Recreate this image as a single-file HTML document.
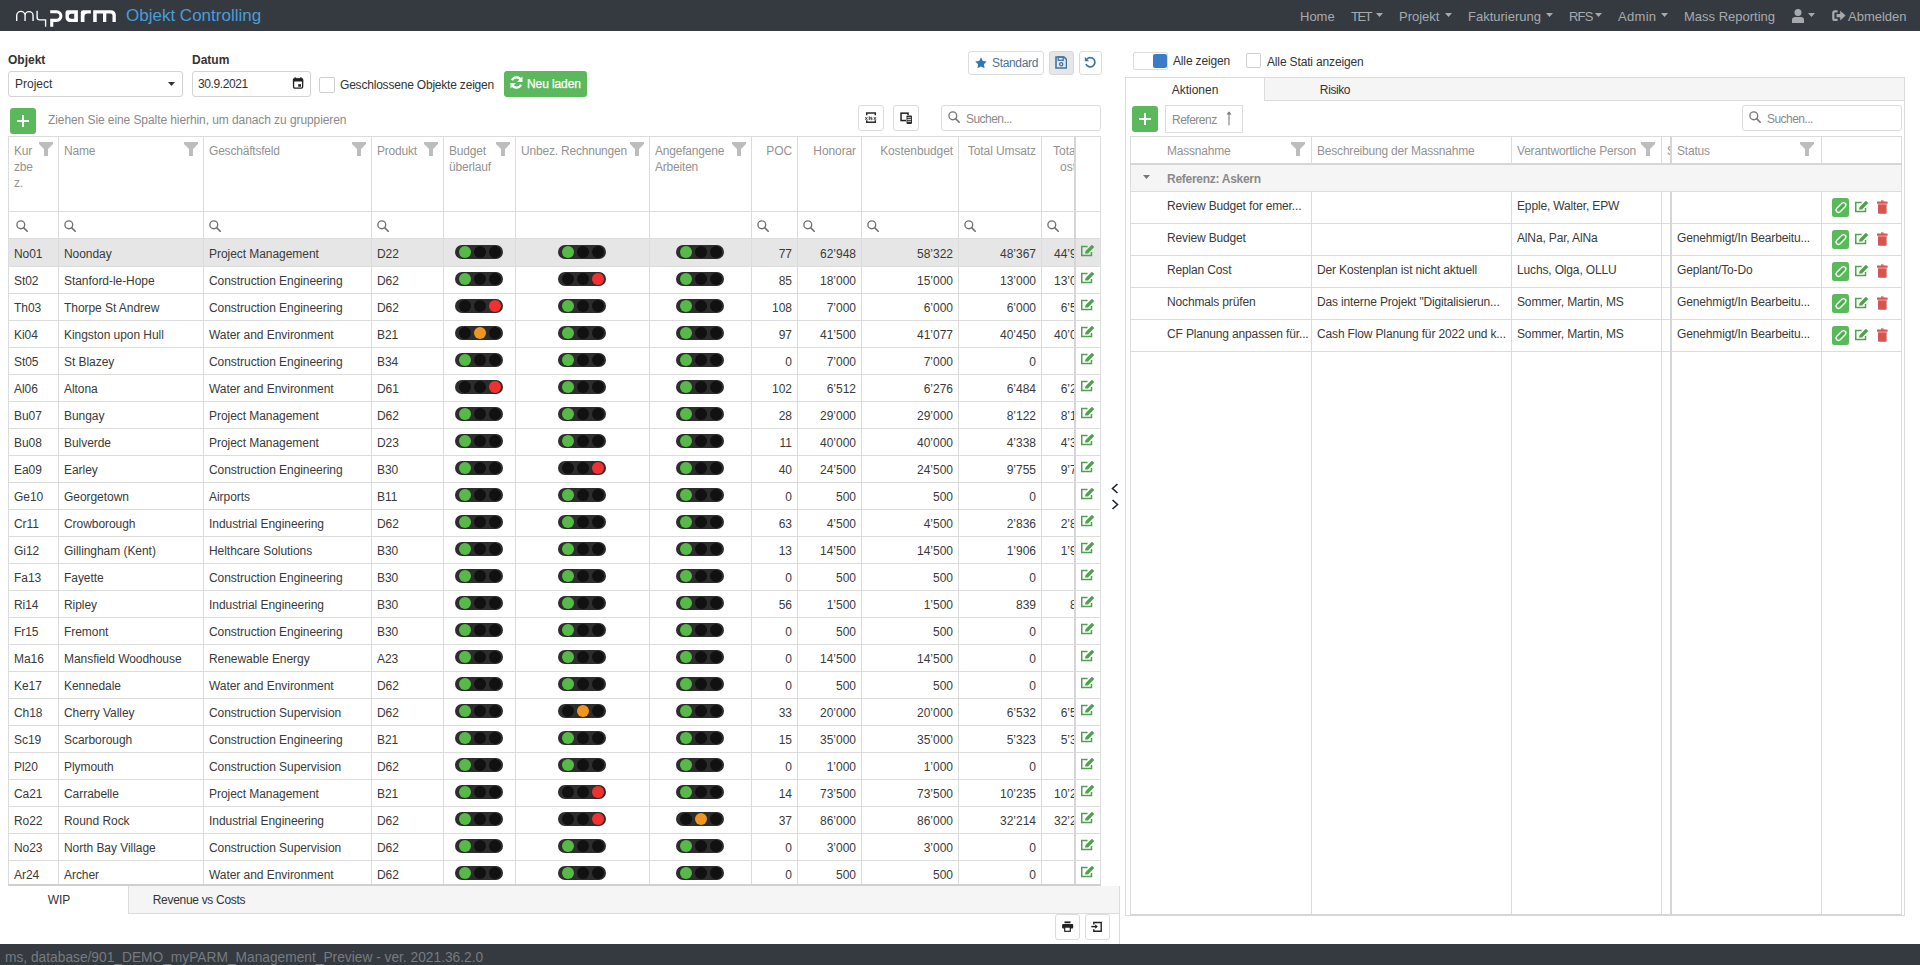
<!DOCTYPE html><html><head><meta charset="utf-8"><style>
html,body{margin:0;padding:0;width:1920px;height:965px;overflow:hidden;background:#fff;position:relative;font-family:"Liberation Sans",sans-serif;}
.t{position:absolute;white-space:nowrap;}
</style></head><body>
<div style="position:absolute;box-sizing:border-box;left:0px;top:0px;width:1920px;height:31px;background:#343a40"></div>
<svg style="position:absolute;left:0px;top:0px;" width="125" height="31" viewBox="0 0 125 31"><g fill="none" stroke="#fff" stroke-width="1.35"><path d="M16.7 21V15.6A4.17 4.17 0 0 1 25.05 15.6V21M25.05 15.6A4 4 0 0 1 33.05 15.6V21"/><path d="M37.1 10.8V17.2A2.6 2.6 0 0 0 39.7 19.8H45.6V26.8"/></g><g fill="none" stroke="#fff" stroke-width="3.1"><path d="M50.2 11.75H56.6A4.3 4.3 0 0 1 56.6 20.35H50.2M51.75 20V26.7"/></g><path fill="#fff" fill-rule="evenodd" d="M65.5 10.2H77.9V22H70A4.5 4.5 0 0 1 65.5 17.5V12.2Q65.5 10.2 67.5 10.2ZM74.2 13.7H71.3A2.5 2.5 0 0 0 68.8 16.2A2.5 2.5 0 0 0 71.3 18.7H74.2Z"/><path fill="#fff" d="M80.8 22V12.6A2.4 2.4 0 0 1 83.2 10.2H90.9V13.6H87.6A3.1 3.1 0 0 0 84.5 16.7V22Z"/><path fill="#fff" d="M93.2 22V10.2H111A4.8 4.8 0 0 1 115.8 15V22H112.5V15.6A2.1 2.1 0 0 0 110.4 13.5H106.3V22H103V13.5H96.7V22Z"/></svg>
<div class="t" style="left:126px;top:8.11px;font-size:17px;line-height:16px;color:#4b9dd6;font-weight:normal;">Objekt Controlling</div>
<div class="t" style="left:1300px;top:8.50px;font-size:13px;line-height:16px;color:#a7aaad;font-weight:normal;letter-spacing:0px;">Home</div>
<div class="t" style="left:1351px;top:8.50px;font-size:13px;line-height:16px;color:#a7aaad;font-weight:normal;letter-spacing:-1.5px;">TET</div>
<div class="t" style="left:1399px;top:8.50px;font-size:13px;line-height:16px;color:#a7aaad;font-weight:normal;letter-spacing:0px;">Projekt</div>
<div class="t" style="left:1468px;top:8.50px;font-size:13px;line-height:16px;color:#a7aaad;font-weight:normal;letter-spacing:0px;">Fakturierung</div>
<div class="t" style="left:1569px;top:8.50px;font-size:13px;line-height:16px;color:#a7aaad;font-weight:normal;letter-spacing:-0.8px;">RFS</div>
<div class="t" style="left:1618px;top:8.50px;font-size:13px;line-height:16px;color:#a7aaad;font-weight:normal;letter-spacing:0.3px;">Admin</div>
<div class="t" style="left:1684px;top:8.50px;font-size:13px;line-height:16px;color:#a7aaad;font-weight:normal;letter-spacing:0px;">Mass Reporting</div>
<svg style="position:absolute;left:1376px;top:13px;" width="7" height="4" viewBox="0 0 7 4"><path d="M0 0H7L3.5 4Z" fill="#a7aaad"/></svg>
<svg style="position:absolute;left:1445px;top:13px;" width="7" height="4" viewBox="0 0 7 4"><path d="M0 0H7L3.5 4Z" fill="#a7aaad"/></svg>
<svg style="position:absolute;left:1546px;top:13px;" width="7" height="4" viewBox="0 0 7 4"><path d="M0 0H7L3.5 4Z" fill="#a7aaad"/></svg>
<svg style="position:absolute;left:1595px;top:13px;" width="7" height="4" viewBox="0 0 7 4"><path d="M0 0H7L3.5 4Z" fill="#a7aaad"/></svg>
<svg style="position:absolute;left:1661px;top:13px;" width="7" height="4" viewBox="0 0 7 4"><path d="M0 0H7L3.5 4Z" fill="#a7aaad"/></svg>
<svg style="position:absolute;left:1808px;top:13px;" width="7" height="4" viewBox="0 0 7 4"><path d="M0 0H7L3.5 4Z" fill="#a7aaad"/></svg>
<svg style="position:absolute;left:1792px;top:9px;" width="12" height="15" viewBox="0 0 12 15"><circle cx="6" cy="3.6" r="3.5" fill="#a7aaad"/><path d="M0 14V10.6C0 9 1.4 8.1 3 8.1H9C10.6 8.1 12 9 12 10.6V14Z" fill="#a7aaad"/></svg>
<svg style="position:absolute;left:1832px;top:10px;" width="14" height="12" viewBox="0 0 14 12"><path d="M5.6 1.3H2.8Q1.3 1.3 1.3 2.8V8.4Q1.3 9.9 2.8 9.9H5.6" fill="none" stroke="#a7aaad" stroke-width="2.2"/><path d="M4.6 4H8.2V0.8L13.6 5.6L8.2 10.4V7.2H4.6Z" fill="#a7aaad"/></svg>
<div class="t" style="left:1848px;top:8.50px;font-size:13px;line-height:16px;color:#a7aaad;font-weight:normal;">Abmelden</div>
<div class="t" style="left:8px;top:51.84px;font-size:12px;line-height:16px;color:#333;font-weight:bold;">Objekt</div>
<div class="t" style="left:192px;top:51.84px;font-size:12px;line-height:16px;color:#333;font-weight:bold;">Datum</div>
<div style="position:absolute;box-sizing:border-box;left:8px;top:71px;width:175px;height:26px;border:1px solid #d4d4d4;border-radius:3px;background:#fff"></div>
<div class="t" style="left:15px;top:76.34px;font-size:12px;line-height:16px;color:#333;font-weight:normal;">Project</div>
<svg style="position:absolute;left:168px;top:82px;" width="7" height="4" viewBox="0 0 7 4"><path d="M0 0H7L3.5 4Z" fill="#333"/></svg>
<div style="position:absolute;box-sizing:border-box;left:192px;top:71px;width:119px;height:26px;border:1px solid #d4d4d4;border-radius:3px;background:#fff"></div>
<div class="t" style="left:198px;top:76.34px;font-size:12px;line-height:16px;color:#333;font-weight:normal;letter-spacing:-0.4px">30.9.2021</div>
<svg style="position:absolute;left:292px;top:77px;" width="12" height="12" viewBox="0 0 12 12"><rect x="1.55" y="2.2" width="9.1" height="8.9" rx="1.3" fill="none" stroke="#222" stroke-width="1.3"/><path d="M0.9 4.6V2.6Q0.9 1.2 2.3 1.2H9.8Q11.2 1.2 11.2 2.6V4.6Z" fill="#222"/><rect x="2.4" y="0.4" width="1.8" height="1.2" fill="#222"/><rect x="7.9" y="0.4" width="1.8" height="1.2" fill="#222"/><rect x="6.2" y="7.2" width="2.8" height="2.5" fill="#222"/></svg>
<div style="position:absolute;box-sizing:border-box;left:319px;top:77px;width:16px;height:16px;border:1px solid #cfcfcf;border-radius:2px;background:#fff"></div>
<div class="t" style="left:340px;top:77.34px;font-size:12px;line-height:16px;color:#333;font-weight:normal;letter-spacing:-0.2px">Geschlossene Objekte zeigen</div>
<div style="position:absolute;box-sizing:border-box;left:504px;top:71px;width:83px;height:26px;background:#5cb85c;border-radius:3px"></div>
<svg style="position:absolute;left:510px;top:76px;" width="13" height="13" viewBox="0 0 13 13"><path d="M11.2 4.6A5 5 0 0 0 2 4.2" fill="none" stroke="#fff" stroke-width="2.2"/><path d="M12.5 0.5V6H7Z" fill="#fff"/><path d="M1.8 8.4A5 5 0 0 0 11 8.8" fill="none" stroke="#fff" stroke-width="2.2"/><path d="M0.5 12.5V7H6Z" fill="#fff"/></svg>
<div class="t" style="left:527px;top:75.84px;font-size:12px;line-height:16px;color:#fff;font-weight:normal;letter-spacing:-0.1px;-webkit-text-stroke:0.25px #fff">Neu laden</div>
<div style="position:absolute;box-sizing:border-box;left:968px;top:51px;width:76px;height:24px;border:1px solid #dcdcdc;border-radius:3px;background:#fff"></div>
<svg style="position:absolute;left:975px;top:57px;" width="12" height="12" viewBox="0 0 12 12"><path d="M6 0.3L7.8 4L11.8 4.5L8.9 7.3L9.6 11.3L6 9.4L2.4 11.3L3.1 7.3L0.2 4.5L4.2 4Z" fill="#2f78b8"/></svg>
<div class="t" style="left:992px;top:54.84px;font-size:12px;line-height:16px;color:#4f7393;font-weight:normal;letter-spacing:-0.33px;">Standard</div>
<div style="position:absolute;box-sizing:border-box;left:1049px;top:51px;width:25px;height:24px;border:1px solid #d8d8d8;border-radius:3px;background:#e6e6e6"></div>
<svg style="position:absolute;left:1055px;top:56px;" width="12" height="13" viewBox="0 0 12 13"><path d="M1 1H9L11.5 3.5V12H1Z" fill="none" stroke="#3f74a6" stroke-width="1.6"/><rect x="3.2" y="1" width="5" height="3.3" fill="none" stroke="#3f74a6" stroke-width="1.3"/><circle cx="6.2" cy="8.2" r="1.6" fill="none" stroke="#3f74a6" stroke-width="1.3"/></svg>
<div style="position:absolute;box-sizing:border-box;left:1079px;top:51px;width:23px;height:24px;border:1px solid #dcdcdc;border-radius:3px;background:#fff"></div>
<svg style="position:absolute;left:1084px;top:56px;" width="12" height="12" viewBox="0 0 12 12"><path d="M2.8 3.2A4.6 4.6 0 1 1 2 8" fill="none" stroke="#3f74a6" stroke-width="1.7"/><path d="M0.8 0.8V5.2H5.2Z" fill="#3f74a6"/></svg>
<div style="position:absolute;box-sizing:border-box;left:10px;top:108px;width:26px;height:26px;background:#5cb85c;border-radius:3px"></div>
<div style="position:absolute;box-sizing:border-box;left:17px;top:120px;width:12px;height:2px;background:#fff"></div>
<div style="position:absolute;box-sizing:border-box;left:22px;top:115px;width:2px;height:12px;background:#fff"></div>
<div class="t" style="left:48px;top:111.84px;font-size:12px;line-height:16px;color:#8a8a8a;font-weight:normal;letter-spacing:-0.08px">Ziehen Sie eine Spalte hierhin, um danach zu gruppieren</div>
<div style="position:absolute;box-sizing:border-box;left:858px;top:105px;width:26px;height:26px;border:1px solid #dcdcdc;border-radius:3px;background:#fff"></div>
<svg style="position:absolute;left:865px;top:111px;" width="12" height="13" viewBox="0 0 12 13"><path d="M1.7 4.2V1.9H10.3V4.2M1.7 9.2V11.3H10.3V9.2" fill="none" stroke="#2a2a2a" stroke-width="1.5"/><path d="M0.3 6.1L2.4 8.9M2.4 6.1L0.3 8.9M8.9 6.1L11 8.9M11 6.1L8.9 8.9" stroke="#333" stroke-width="0.9"/><path d="M4.3 5.4V8.9" stroke="#333" stroke-width="1"/><path d="M7.2 6.3H5.7V7.5H7.1V8.7H5.6" fill="none" stroke="#333" stroke-width="0.8"/></svg>
<div style="position:absolute;box-sizing:border-box;left:893px;top:105px;width:26px;height:26px;border:1px solid #dcdcdc;border-radius:3px;background:#fff"></div>
<svg style="position:absolute;left:900px;top:111px;" width="13" height="14" viewBox="0 0 13 14"><rect x="1.05" y="2.15" width="7" height="7.4" fill="none" stroke="#222" stroke-width="1.5"/><rect x="6" y="4" width="6.5" height="9.4" rx="1" fill="#fff"/><rect x="6.5" y="4.5" width="5.5" height="8.4" rx="0.8" fill="#2a2a2a"/><path d="M7.4 6.7H11.1M7.4 8.5H11.1M7.4 10.3H11.1" stroke="#fff" stroke-width="0.8"/></svg>
<div style="position:absolute;box-sizing:border-box;left:941px;top:105px;width:160px;height:26px;border:1px solid #dcdcdc;border-radius:3px;background:#fff"></div>
<svg style="position:absolute;left:948px;top:111px;" width="12" height="12" viewBox="0 0 12 12"><circle cx="4.8" cy="4.8" r="3.9" fill="none" stroke="#777" stroke-width="1.35"/><path d="M7.6 7.6L11.2 11.2" stroke="#777" stroke-width="1.6" stroke-linecap="round"/></svg>
<div class="t" style="left:966px;top:110.84px;font-size:12px;line-height:16px;color:#8a8a8a;font-weight:normal;letter-spacing:-0.55px;">Suchen...</div>
<div style="position:absolute;box-sizing:border-box;left:9px;top:239px;width:1091px;height:27px;background:#e6e6e6"></div>
<div style="position:absolute;box-sizing:border-box;left:8px;top:136px;width:1093px;height:748px;border:1px solid #dcdcdc;border-bottom:none;box-sizing:border-box"></div>
<div style="position:absolute;box-sizing:border-box;left:8px;top:884px;width:1093px;height:2px;background:#d0d0d0"></div>
<div style="position:absolute;box-sizing:border-box;left:8px;top:211px;width:1092px;height:1px;background:#dcdcdc"></div>
<div style="position:absolute;box-sizing:border-box;left:8px;top:238px;width:1092px;height:1px;background:#dcdcdc"></div>
<div style="position:absolute;box-sizing:border-box;left:8px;top:266px;width:1092px;height:1px;background:#dcdcdc"></div>
<div style="position:absolute;box-sizing:border-box;left:8px;top:293px;width:1092px;height:1px;background:#dcdcdc"></div>
<div style="position:absolute;box-sizing:border-box;left:8px;top:320px;width:1092px;height:1px;background:#dcdcdc"></div>
<div style="position:absolute;box-sizing:border-box;left:8px;top:347px;width:1092px;height:1px;background:#dcdcdc"></div>
<div style="position:absolute;box-sizing:border-box;left:8px;top:374px;width:1092px;height:1px;background:#dcdcdc"></div>
<div style="position:absolute;box-sizing:border-box;left:8px;top:401px;width:1092px;height:1px;background:#dcdcdc"></div>
<div style="position:absolute;box-sizing:border-box;left:8px;top:428px;width:1092px;height:1px;background:#dcdcdc"></div>
<div style="position:absolute;box-sizing:border-box;left:8px;top:455px;width:1092px;height:1px;background:#dcdcdc"></div>
<div style="position:absolute;box-sizing:border-box;left:8px;top:482px;width:1092px;height:1px;background:#dcdcdc"></div>
<div style="position:absolute;box-sizing:border-box;left:8px;top:509px;width:1092px;height:1px;background:#dcdcdc"></div>
<div style="position:absolute;box-sizing:border-box;left:8px;top:536px;width:1092px;height:1px;background:#dcdcdc"></div>
<div style="position:absolute;box-sizing:border-box;left:8px;top:563px;width:1092px;height:1px;background:#dcdcdc"></div>
<div style="position:absolute;box-sizing:border-box;left:8px;top:590px;width:1092px;height:1px;background:#dcdcdc"></div>
<div style="position:absolute;box-sizing:border-box;left:8px;top:617px;width:1092px;height:1px;background:#dcdcdc"></div>
<div style="position:absolute;box-sizing:border-box;left:8px;top:644px;width:1092px;height:1px;background:#dcdcdc"></div>
<div style="position:absolute;box-sizing:border-box;left:8px;top:671px;width:1092px;height:1px;background:#dcdcdc"></div>
<div style="position:absolute;box-sizing:border-box;left:8px;top:698px;width:1092px;height:1px;background:#dcdcdc"></div>
<div style="position:absolute;box-sizing:border-box;left:8px;top:725px;width:1092px;height:1px;background:#dcdcdc"></div>
<div style="position:absolute;box-sizing:border-box;left:8px;top:752px;width:1092px;height:1px;background:#dcdcdc"></div>
<div style="position:absolute;box-sizing:border-box;left:8px;top:779px;width:1092px;height:1px;background:#dcdcdc"></div>
<div style="position:absolute;box-sizing:border-box;left:8px;top:806px;width:1092px;height:1px;background:#dcdcdc"></div>
<div style="position:absolute;box-sizing:border-box;left:8px;top:833px;width:1092px;height:1px;background:#dcdcdc"></div>
<div style="position:absolute;box-sizing:border-box;left:8px;top:860px;width:1092px;height:1px;background:#dcdcdc"></div>
<div style="position:absolute;box-sizing:border-box;left:58px;top:136px;width:1px;height:748px;background:#dcdcdc"></div>
<div style="position:absolute;box-sizing:border-box;left:203px;top:136px;width:1px;height:748px;background:#dcdcdc"></div>
<div style="position:absolute;box-sizing:border-box;left:371px;top:136px;width:1px;height:748px;background:#dcdcdc"></div>
<div style="position:absolute;box-sizing:border-box;left:443px;top:136px;width:1px;height:748px;background:#dcdcdc"></div>
<div style="position:absolute;box-sizing:border-box;left:515px;top:136px;width:1px;height:748px;background:#dcdcdc"></div>
<div style="position:absolute;box-sizing:border-box;left:649px;top:136px;width:1px;height:748px;background:#dcdcdc"></div>
<div style="position:absolute;box-sizing:border-box;left:751px;top:136px;width:1px;height:748px;background:#dcdcdc"></div>
<div style="position:absolute;box-sizing:border-box;left:797px;top:136px;width:1px;height:748px;background:#dcdcdc"></div>
<div style="position:absolute;box-sizing:border-box;left:861px;top:136px;width:1px;height:748px;background:#dcdcdc"></div>
<div style="position:absolute;box-sizing:border-box;left:958px;top:136px;width:1px;height:748px;background:#dcdcdc"></div>
<div style="position:absolute;box-sizing:border-box;left:1041px;top:136px;width:1px;height:748px;background:#dcdcdc"></div>
<div style="position:absolute;box-sizing:border-box;left:1074px;top:136px;width:2px;height:748px;background:#d6d6d6"></div>
<div class="t" style="left:14px;top:142.84px;font-size:12px;line-height:16px;color:#939393;font-weight:normal;letter-spacing:-0.2px;">Kur</div>
<div class="t" style="left:14px;top:158.84px;font-size:12px;line-height:16px;color:#939393;font-weight:normal;letter-spacing:-0.2px;">zbe</div>
<div class="t" style="left:14px;top:174.84px;font-size:12px;line-height:16px;color:#939393;font-weight:normal;letter-spacing:-0.2px;">z.</div>
<svg style="position:absolute;left:39px;top:142px;" width="14" height="14" viewBox="0 0 14 14"><path d="M0 0H14V2L9 7V14H5V7L0 2Z" fill="#bdbdbd"/></svg>
<div class="t" style="left:64px;top:142.84px;font-size:12px;line-height:16px;color:#939393;font-weight:normal;letter-spacing:-0.2px;">Name</div>
<svg style="position:absolute;left:184px;top:142px;" width="14" height="14" viewBox="0 0 14 14"><path d="M0 0H14V2L9 7V14H5V7L0 2Z" fill="#bdbdbd"/></svg>
<div class="t" style="left:209px;top:142.84px;font-size:12px;line-height:16px;color:#939393;font-weight:normal;letter-spacing:-0.2px;">Geschäftsfeld</div>
<svg style="position:absolute;left:352px;top:142px;" width="14" height="14" viewBox="0 0 14 14"><path d="M0 0H14V2L9 7V14H5V7L0 2Z" fill="#bdbdbd"/></svg>
<div class="t" style="left:377px;top:142.84px;font-size:12px;line-height:16px;color:#939393;font-weight:normal;letter-spacing:-0.2px;">Produkt</div>
<svg style="position:absolute;left:424px;top:142px;" width="14" height="14" viewBox="0 0 14 14"><path d="M0 0H14V2L9 7V14H5V7L0 2Z" fill="#bdbdbd"/></svg>
<div class="t" style="left:449px;top:142.84px;font-size:12px;line-height:16px;color:#939393;font-weight:normal;letter-spacing:-0.2px;">Budget</div>
<div class="t" style="left:449px;top:158.84px;font-size:12px;line-height:16px;color:#939393;font-weight:normal;letter-spacing:-0.2px;">überlauf</div>
<svg style="position:absolute;left:496px;top:142px;" width="14" height="14" viewBox="0 0 14 14"><path d="M0 0H14V2L9 7V14H5V7L0 2Z" fill="#bdbdbd"/></svg>
<div class="t" style="left:521px;top:142.84px;font-size:12px;line-height:16px;color:#939393;font-weight:normal;letter-spacing:-0.2px;">Unbez. Rechnungen</div>
<svg style="position:absolute;left:630px;top:142px;" width="14" height="14" viewBox="0 0 14 14"><path d="M0 0H14V2L9 7V14H5V7L0 2Z" fill="#bdbdbd"/></svg>
<div class="t" style="left:655px;top:142.84px;font-size:12px;line-height:16px;color:#939393;font-weight:normal;letter-spacing:-0.2px;">Angefangene</div>
<div class="t" style="left:655px;top:158.84px;font-size:12px;line-height:16px;color:#939393;font-weight:normal;letter-spacing:-0.2px;">Arbeiten</div>
<svg style="position:absolute;left:732px;top:142px;" width="14" height="14" viewBox="0 0 14 14"><path d="M0 0H14V2L9 7V14H5V7L0 2Z" fill="#bdbdbd"/></svg>
<div class="t" style="left:672px;width:120px;text-align:right;top:142.84px;font-size:12px;line-height:16px;color:#939393;font-weight:normal;letter-spacing:-0.1px;">POC</div>
<div class="t" style="left:736px;width:120px;text-align:right;top:142.84px;font-size:12px;line-height:16px;color:#939393;font-weight:normal;letter-spacing:-0.1px;">Honorar</div>
<div class="t" style="left:833px;width:120px;text-align:right;top:142.84px;font-size:12px;line-height:16px;color:#939393;font-weight:normal;letter-spacing:-0.1px;">Kostenbudget</div>
<div class="t" style="left:916px;width:120px;text-align:right;top:142.84px;font-size:12px;line-height:16px;color:#939393;font-weight:normal;letter-spacing:-0.1px;">Total Umsatz</div>
<div style="position:absolute;left:1042px;top:137px;width:32px;height:74px;overflow:hidden">
<div class="t" style="left:11px;top:5.84px;font-size:12px;line-height:16px;color:#939393;font-weight:normal;">Tota</div>
<div class="t" style="left:18px;top:21.84px;font-size:12px;line-height:16px;color:#939393;font-weight:normal;">osten</div>
</div>
<svg style="position:absolute;left:16px;top:220px;" width="12" height="12" viewBox="0 0 12 12"><circle cx="4.8" cy="4.8" r="3.9" fill="none" stroke="#707070" stroke-width="1.35"/><path d="M7.6 7.6L11.2 11.2" stroke="#707070" stroke-width="1.6" stroke-linecap="round"/></svg>
<svg style="position:absolute;left:64px;top:220px;" width="12" height="12" viewBox="0 0 12 12"><circle cx="4.8" cy="4.8" r="3.9" fill="none" stroke="#707070" stroke-width="1.35"/><path d="M7.6 7.6L11.2 11.2" stroke="#707070" stroke-width="1.6" stroke-linecap="round"/></svg>
<svg style="position:absolute;left:209px;top:220px;" width="12" height="12" viewBox="0 0 12 12"><circle cx="4.8" cy="4.8" r="3.9" fill="none" stroke="#707070" stroke-width="1.35"/><path d="M7.6 7.6L11.2 11.2" stroke="#707070" stroke-width="1.6" stroke-linecap="round"/></svg>
<svg style="position:absolute;left:377px;top:220px;" width="12" height="12" viewBox="0 0 12 12"><circle cx="4.8" cy="4.8" r="3.9" fill="none" stroke="#707070" stroke-width="1.35"/><path d="M7.6 7.6L11.2 11.2" stroke="#707070" stroke-width="1.6" stroke-linecap="round"/></svg>
<svg style="position:absolute;left:757px;top:220px;" width="12" height="12" viewBox="0 0 12 12"><circle cx="4.8" cy="4.8" r="3.9" fill="none" stroke="#707070" stroke-width="1.35"/><path d="M7.6 7.6L11.2 11.2" stroke="#707070" stroke-width="1.6" stroke-linecap="round"/></svg>
<svg style="position:absolute;left:803px;top:220px;" width="12" height="12" viewBox="0 0 12 12"><circle cx="4.8" cy="4.8" r="3.9" fill="none" stroke="#707070" stroke-width="1.35"/><path d="M7.6 7.6L11.2 11.2" stroke="#707070" stroke-width="1.6" stroke-linecap="round"/></svg>
<svg style="position:absolute;left:867px;top:220px;" width="12" height="12" viewBox="0 0 12 12"><circle cx="4.8" cy="4.8" r="3.9" fill="none" stroke="#707070" stroke-width="1.35"/><path d="M7.6 7.6L11.2 11.2" stroke="#707070" stroke-width="1.6" stroke-linecap="round"/></svg>
<svg style="position:absolute;left:964px;top:220px;" width="12" height="12" viewBox="0 0 12 12"><circle cx="4.8" cy="4.8" r="3.9" fill="none" stroke="#707070" stroke-width="1.35"/><path d="M7.6 7.6L11.2 11.2" stroke="#707070" stroke-width="1.6" stroke-linecap="round"/></svg>
<svg style="position:absolute;left:1047px;top:220px;" width="12" height="12" viewBox="0 0 12 12"><circle cx="4.8" cy="4.8" r="3.9" fill="none" stroke="#707070" stroke-width="1.35"/><path d="M7.6 7.6L11.2 11.2" stroke="#707070" stroke-width="1.6" stroke-linecap="round"/></svg>
<div class="t" style="left:14px;top:245.84px;font-size:12px;line-height:16px;color:#3a3a3a;font-weight:normal;letter-spacing:-0.05px;">No01</div>
<div class="t" style="left:64px;top:245.84px;font-size:12px;line-height:16px;color:#3a3a3a;font-weight:normal;letter-spacing:-0.05px;">Noonday</div>
<div class="t" style="left:209px;top:245.84px;font-size:12px;line-height:16px;color:#3a3a3a;font-weight:normal;letter-spacing:-0.05px;">Project Management</div>
<div class="t" style="left:377px;top:245.84px;font-size:12px;line-height:16px;color:#3a3a3a;font-weight:normal;letter-spacing:-0.05px;">D22</div>
<svg style="position:absolute;left:455px;top:245px;" width="48" height="14" viewBox="0 0 48 14"><rect x="0" y="0" width="48" height="14" rx="7" fill="#2d2d2d"/><circle cx="10" cy="7" r="6" fill="#57b947"/><circle cx="25" cy="7" r="6" fill="#111"/><circle cx="40" cy="7" r="6" fill="#111"/></svg>
<svg style="position:absolute;left:558px;top:245px;" width="48" height="14" viewBox="0 0 48 14"><rect x="0" y="0" width="48" height="14" rx="7" fill="#2d2d2d"/><circle cx="10" cy="7" r="6" fill="#57b947"/><circle cx="25" cy="7" r="6" fill="#111"/><circle cx="40" cy="7" r="6" fill="#111"/></svg>
<svg style="position:absolute;left:676px;top:245px;" width="48" height="14" viewBox="0 0 48 14"><rect x="0" y="0" width="48" height="14" rx="7" fill="#2d2d2d"/><circle cx="10" cy="7" r="6" fill="#57b947"/><circle cx="25" cy="7" r="6" fill="#111"/><circle cx="40" cy="7" r="6" fill="#111"/></svg>
<div class="t" style="left:752px;width:40px;text-align:right;top:245.84px;font-size:12px;line-height:16px;color:#3a3a3a;font-weight:normal;">77</div>
<div class="t" style="left:796px;width:60px;text-align:right;top:245.84px;font-size:12px;line-height:16px;color:#3a3a3a;font-weight:normal;">62’948</div>
<div class="t" style="left:873px;width:80px;text-align:right;top:245.84px;font-size:12px;line-height:16px;color:#3a3a3a;font-weight:normal;">58’322</div>
<div class="t" style="left:956px;width:80px;text-align:right;top:245.84px;font-size:12px;line-height:16px;color:#3a3a3a;font-weight:normal;">48’367</div>
<svg style="position:absolute;left:1081px;top:245px;" width="15" height="13" viewBox="0 0 15 13"><path d="M6.6 1.5H0.75V10.5H10.5V7" fill="none" stroke="#4fa14f" stroke-width="1.5"/><path d="M3.9 8.6L4.6 6L10.9 -0.3L13.3 2.1L7 8.4Z" fill="#4fa14f"/></svg>
<div class="t" style="left:14px;top:272.84px;font-size:12px;line-height:16px;color:#3a3a3a;font-weight:normal;letter-spacing:-0.05px;">St02</div>
<div class="t" style="left:64px;top:272.84px;font-size:12px;line-height:16px;color:#3a3a3a;font-weight:normal;letter-spacing:-0.05px;">Stanford-le-Hope</div>
<div class="t" style="left:209px;top:272.84px;font-size:12px;line-height:16px;color:#3a3a3a;font-weight:normal;letter-spacing:-0.05px;">Construction Engineering</div>
<div class="t" style="left:377px;top:272.84px;font-size:12px;line-height:16px;color:#3a3a3a;font-weight:normal;letter-spacing:-0.05px;">D62</div>
<svg style="position:absolute;left:455px;top:272px;" width="48" height="14" viewBox="0 0 48 14"><rect x="0" y="0" width="48" height="14" rx="7" fill="#2d2d2d"/><circle cx="10" cy="7" r="6" fill="#57b947"/><circle cx="25" cy="7" r="6" fill="#111"/><circle cx="40" cy="7" r="6" fill="#111"/></svg>
<svg style="position:absolute;left:558px;top:272px;" width="48" height="14" viewBox="0 0 48 14"><rect x="0" y="0" width="48" height="14" rx="7" fill="#2d2d2d"/><circle cx="10" cy="7" r="6" fill="#111"/><circle cx="25" cy="7" r="6" fill="#111"/><circle cx="40" cy="7" r="6" fill="#f23030"/></svg>
<svg style="position:absolute;left:676px;top:272px;" width="48" height="14" viewBox="0 0 48 14"><rect x="0" y="0" width="48" height="14" rx="7" fill="#2d2d2d"/><circle cx="10" cy="7" r="6" fill="#57b947"/><circle cx="25" cy="7" r="6" fill="#111"/><circle cx="40" cy="7" r="6" fill="#111"/></svg>
<div class="t" style="left:752px;width:40px;text-align:right;top:272.84px;font-size:12px;line-height:16px;color:#3a3a3a;font-weight:normal;">85</div>
<div class="t" style="left:796px;width:60px;text-align:right;top:272.84px;font-size:12px;line-height:16px;color:#3a3a3a;font-weight:normal;">18’000</div>
<div class="t" style="left:873px;width:80px;text-align:right;top:272.84px;font-size:12px;line-height:16px;color:#3a3a3a;font-weight:normal;">15’000</div>
<div class="t" style="left:956px;width:80px;text-align:right;top:272.84px;font-size:12px;line-height:16px;color:#3a3a3a;font-weight:normal;">13’000</div>
<svg style="position:absolute;left:1081px;top:272px;" width="15" height="13" viewBox="0 0 15 13"><path d="M6.6 1.5H0.75V10.5H10.5V7" fill="none" stroke="#4fa14f" stroke-width="1.5"/><path d="M3.9 8.6L4.6 6L10.9 -0.3L13.3 2.1L7 8.4Z" fill="#4fa14f"/></svg>
<div class="t" style="left:14px;top:299.84px;font-size:12px;line-height:16px;color:#3a3a3a;font-weight:normal;letter-spacing:-0.05px;">Th03</div>
<div class="t" style="left:64px;top:299.84px;font-size:12px;line-height:16px;color:#3a3a3a;font-weight:normal;letter-spacing:-0.05px;">Thorpe St Andrew</div>
<div class="t" style="left:209px;top:299.84px;font-size:12px;line-height:16px;color:#3a3a3a;font-weight:normal;letter-spacing:-0.05px;">Construction Engineering</div>
<div class="t" style="left:377px;top:299.84px;font-size:12px;line-height:16px;color:#3a3a3a;font-weight:normal;letter-spacing:-0.05px;">D62</div>
<svg style="position:absolute;left:455px;top:299px;" width="48" height="14" viewBox="0 0 48 14"><rect x="0" y="0" width="48" height="14" rx="7" fill="#2d2d2d"/><circle cx="10" cy="7" r="6" fill="#111"/><circle cx="25" cy="7" r="6" fill="#111"/><circle cx="40" cy="7" r="6" fill="#f23030"/></svg>
<svg style="position:absolute;left:558px;top:299px;" width="48" height="14" viewBox="0 0 48 14"><rect x="0" y="0" width="48" height="14" rx="7" fill="#2d2d2d"/><circle cx="10" cy="7" r="6" fill="#57b947"/><circle cx="25" cy="7" r="6" fill="#111"/><circle cx="40" cy="7" r="6" fill="#111"/></svg>
<svg style="position:absolute;left:676px;top:299px;" width="48" height="14" viewBox="0 0 48 14"><rect x="0" y="0" width="48" height="14" rx="7" fill="#2d2d2d"/><circle cx="10" cy="7" r="6" fill="#57b947"/><circle cx="25" cy="7" r="6" fill="#111"/><circle cx="40" cy="7" r="6" fill="#111"/></svg>
<div class="t" style="left:752px;width:40px;text-align:right;top:299.84px;font-size:12px;line-height:16px;color:#3a3a3a;font-weight:normal;">108</div>
<div class="t" style="left:796px;width:60px;text-align:right;top:299.84px;font-size:12px;line-height:16px;color:#3a3a3a;font-weight:normal;">7’000</div>
<div class="t" style="left:873px;width:80px;text-align:right;top:299.84px;font-size:12px;line-height:16px;color:#3a3a3a;font-weight:normal;">6’000</div>
<div class="t" style="left:956px;width:80px;text-align:right;top:299.84px;font-size:12px;line-height:16px;color:#3a3a3a;font-weight:normal;">6’000</div>
<svg style="position:absolute;left:1081px;top:299px;" width="15" height="13" viewBox="0 0 15 13"><path d="M6.6 1.5H0.75V10.5H10.5V7" fill="none" stroke="#4fa14f" stroke-width="1.5"/><path d="M3.9 8.6L4.6 6L10.9 -0.3L13.3 2.1L7 8.4Z" fill="#4fa14f"/></svg>
<div class="t" style="left:14px;top:326.84px;font-size:12px;line-height:16px;color:#3a3a3a;font-weight:normal;letter-spacing:-0.05px;">Ki04</div>
<div class="t" style="left:64px;top:326.84px;font-size:12px;line-height:16px;color:#3a3a3a;font-weight:normal;letter-spacing:-0.05px;">Kingston upon Hull</div>
<div class="t" style="left:209px;top:326.84px;font-size:12px;line-height:16px;color:#3a3a3a;font-weight:normal;letter-spacing:-0.05px;">Water and Environment</div>
<div class="t" style="left:377px;top:326.84px;font-size:12px;line-height:16px;color:#3a3a3a;font-weight:normal;letter-spacing:-0.05px;">B21</div>
<svg style="position:absolute;left:455px;top:326px;" width="48" height="14" viewBox="0 0 48 14"><rect x="0" y="0" width="48" height="14" rx="7" fill="#2d2d2d"/><circle cx="10" cy="7" r="6" fill="#111"/><circle cx="25" cy="7" r="6" fill="#f0961e"/><circle cx="40" cy="7" r="6" fill="#111"/></svg>
<svg style="position:absolute;left:558px;top:326px;" width="48" height="14" viewBox="0 0 48 14"><rect x="0" y="0" width="48" height="14" rx="7" fill="#2d2d2d"/><circle cx="10" cy="7" r="6" fill="#57b947"/><circle cx="25" cy="7" r="6" fill="#111"/><circle cx="40" cy="7" r="6" fill="#111"/></svg>
<svg style="position:absolute;left:676px;top:326px;" width="48" height="14" viewBox="0 0 48 14"><rect x="0" y="0" width="48" height="14" rx="7" fill="#2d2d2d"/><circle cx="10" cy="7" r="6" fill="#57b947"/><circle cx="25" cy="7" r="6" fill="#111"/><circle cx="40" cy="7" r="6" fill="#111"/></svg>
<div class="t" style="left:752px;width:40px;text-align:right;top:326.84px;font-size:12px;line-height:16px;color:#3a3a3a;font-weight:normal;">97</div>
<div class="t" style="left:796px;width:60px;text-align:right;top:326.84px;font-size:12px;line-height:16px;color:#3a3a3a;font-weight:normal;">41’500</div>
<div class="t" style="left:873px;width:80px;text-align:right;top:326.84px;font-size:12px;line-height:16px;color:#3a3a3a;font-weight:normal;">41’077</div>
<div class="t" style="left:956px;width:80px;text-align:right;top:326.84px;font-size:12px;line-height:16px;color:#3a3a3a;font-weight:normal;">40’450</div>
<svg style="position:absolute;left:1081px;top:326px;" width="15" height="13" viewBox="0 0 15 13"><path d="M6.6 1.5H0.75V10.5H10.5V7" fill="none" stroke="#4fa14f" stroke-width="1.5"/><path d="M3.9 8.6L4.6 6L10.9 -0.3L13.3 2.1L7 8.4Z" fill="#4fa14f"/></svg>
<div class="t" style="left:14px;top:353.84px;font-size:12px;line-height:16px;color:#3a3a3a;font-weight:normal;letter-spacing:-0.05px;">St05</div>
<div class="t" style="left:64px;top:353.84px;font-size:12px;line-height:16px;color:#3a3a3a;font-weight:normal;letter-spacing:-0.05px;">St Blazey</div>
<div class="t" style="left:209px;top:353.84px;font-size:12px;line-height:16px;color:#3a3a3a;font-weight:normal;letter-spacing:-0.05px;">Construction Engineering</div>
<div class="t" style="left:377px;top:353.84px;font-size:12px;line-height:16px;color:#3a3a3a;font-weight:normal;letter-spacing:-0.05px;">B34</div>
<svg style="position:absolute;left:455px;top:353px;" width="48" height="14" viewBox="0 0 48 14"><rect x="0" y="0" width="48" height="14" rx="7" fill="#2d2d2d"/><circle cx="10" cy="7" r="6" fill="#57b947"/><circle cx="25" cy="7" r="6" fill="#111"/><circle cx="40" cy="7" r="6" fill="#111"/></svg>
<svg style="position:absolute;left:558px;top:353px;" width="48" height="14" viewBox="0 0 48 14"><rect x="0" y="0" width="48" height="14" rx="7" fill="#2d2d2d"/><circle cx="10" cy="7" r="6" fill="#57b947"/><circle cx="25" cy="7" r="6" fill="#111"/><circle cx="40" cy="7" r="6" fill="#111"/></svg>
<svg style="position:absolute;left:676px;top:353px;" width="48" height="14" viewBox="0 0 48 14"><rect x="0" y="0" width="48" height="14" rx="7" fill="#2d2d2d"/><circle cx="10" cy="7" r="6" fill="#57b947"/><circle cx="25" cy="7" r="6" fill="#111"/><circle cx="40" cy="7" r="6" fill="#111"/></svg>
<div class="t" style="left:752px;width:40px;text-align:right;top:353.84px;font-size:12px;line-height:16px;color:#3a3a3a;font-weight:normal;">0</div>
<div class="t" style="left:796px;width:60px;text-align:right;top:353.84px;font-size:12px;line-height:16px;color:#3a3a3a;font-weight:normal;">7’000</div>
<div class="t" style="left:873px;width:80px;text-align:right;top:353.84px;font-size:12px;line-height:16px;color:#3a3a3a;font-weight:normal;">7’000</div>
<div class="t" style="left:956px;width:80px;text-align:right;top:353.84px;font-size:12px;line-height:16px;color:#3a3a3a;font-weight:normal;">0</div>
<svg style="position:absolute;left:1081px;top:353px;" width="15" height="13" viewBox="0 0 15 13"><path d="M6.6 1.5H0.75V10.5H10.5V7" fill="none" stroke="#4fa14f" stroke-width="1.5"/><path d="M3.9 8.6L4.6 6L10.9 -0.3L13.3 2.1L7 8.4Z" fill="#4fa14f"/></svg>
<div class="t" style="left:14px;top:380.84px;font-size:12px;line-height:16px;color:#3a3a3a;font-weight:normal;letter-spacing:-0.05px;">Al06</div>
<div class="t" style="left:64px;top:380.84px;font-size:12px;line-height:16px;color:#3a3a3a;font-weight:normal;letter-spacing:-0.05px;">Altona</div>
<div class="t" style="left:209px;top:380.84px;font-size:12px;line-height:16px;color:#3a3a3a;font-weight:normal;letter-spacing:-0.05px;">Water and Environment</div>
<div class="t" style="left:377px;top:380.84px;font-size:12px;line-height:16px;color:#3a3a3a;font-weight:normal;letter-spacing:-0.05px;">D61</div>
<svg style="position:absolute;left:455px;top:380px;" width="48" height="14" viewBox="0 0 48 14"><rect x="0" y="0" width="48" height="14" rx="7" fill="#2d2d2d"/><circle cx="10" cy="7" r="6" fill="#111"/><circle cx="25" cy="7" r="6" fill="#111"/><circle cx="40" cy="7" r="6" fill="#f23030"/></svg>
<svg style="position:absolute;left:558px;top:380px;" width="48" height="14" viewBox="0 0 48 14"><rect x="0" y="0" width="48" height="14" rx="7" fill="#2d2d2d"/><circle cx="10" cy="7" r="6" fill="#57b947"/><circle cx="25" cy="7" r="6" fill="#111"/><circle cx="40" cy="7" r="6" fill="#111"/></svg>
<svg style="position:absolute;left:676px;top:380px;" width="48" height="14" viewBox="0 0 48 14"><rect x="0" y="0" width="48" height="14" rx="7" fill="#2d2d2d"/><circle cx="10" cy="7" r="6" fill="#57b947"/><circle cx="25" cy="7" r="6" fill="#111"/><circle cx="40" cy="7" r="6" fill="#111"/></svg>
<div class="t" style="left:752px;width:40px;text-align:right;top:380.84px;font-size:12px;line-height:16px;color:#3a3a3a;font-weight:normal;">102</div>
<div class="t" style="left:796px;width:60px;text-align:right;top:380.84px;font-size:12px;line-height:16px;color:#3a3a3a;font-weight:normal;">6’512</div>
<div class="t" style="left:873px;width:80px;text-align:right;top:380.84px;font-size:12px;line-height:16px;color:#3a3a3a;font-weight:normal;">6’276</div>
<div class="t" style="left:956px;width:80px;text-align:right;top:380.84px;font-size:12px;line-height:16px;color:#3a3a3a;font-weight:normal;">6’484</div>
<svg style="position:absolute;left:1081px;top:380px;" width="15" height="13" viewBox="0 0 15 13"><path d="M6.6 1.5H0.75V10.5H10.5V7" fill="none" stroke="#4fa14f" stroke-width="1.5"/><path d="M3.9 8.6L4.6 6L10.9 -0.3L13.3 2.1L7 8.4Z" fill="#4fa14f"/></svg>
<div class="t" style="left:14px;top:407.84px;font-size:12px;line-height:16px;color:#3a3a3a;font-weight:normal;letter-spacing:-0.05px;">Bu07</div>
<div class="t" style="left:64px;top:407.84px;font-size:12px;line-height:16px;color:#3a3a3a;font-weight:normal;letter-spacing:-0.05px;">Bungay</div>
<div class="t" style="left:209px;top:407.84px;font-size:12px;line-height:16px;color:#3a3a3a;font-weight:normal;letter-spacing:-0.05px;">Project Management</div>
<div class="t" style="left:377px;top:407.84px;font-size:12px;line-height:16px;color:#3a3a3a;font-weight:normal;letter-spacing:-0.05px;">D62</div>
<svg style="position:absolute;left:455px;top:407px;" width="48" height="14" viewBox="0 0 48 14"><rect x="0" y="0" width="48" height="14" rx="7" fill="#2d2d2d"/><circle cx="10" cy="7" r="6" fill="#57b947"/><circle cx="25" cy="7" r="6" fill="#111"/><circle cx="40" cy="7" r="6" fill="#111"/></svg>
<svg style="position:absolute;left:558px;top:407px;" width="48" height="14" viewBox="0 0 48 14"><rect x="0" y="0" width="48" height="14" rx="7" fill="#2d2d2d"/><circle cx="10" cy="7" r="6" fill="#57b947"/><circle cx="25" cy="7" r="6" fill="#111"/><circle cx="40" cy="7" r="6" fill="#111"/></svg>
<svg style="position:absolute;left:676px;top:407px;" width="48" height="14" viewBox="0 0 48 14"><rect x="0" y="0" width="48" height="14" rx="7" fill="#2d2d2d"/><circle cx="10" cy="7" r="6" fill="#57b947"/><circle cx="25" cy="7" r="6" fill="#111"/><circle cx="40" cy="7" r="6" fill="#111"/></svg>
<div class="t" style="left:752px;width:40px;text-align:right;top:407.84px;font-size:12px;line-height:16px;color:#3a3a3a;font-weight:normal;">28</div>
<div class="t" style="left:796px;width:60px;text-align:right;top:407.84px;font-size:12px;line-height:16px;color:#3a3a3a;font-weight:normal;">29’000</div>
<div class="t" style="left:873px;width:80px;text-align:right;top:407.84px;font-size:12px;line-height:16px;color:#3a3a3a;font-weight:normal;">29’000</div>
<div class="t" style="left:956px;width:80px;text-align:right;top:407.84px;font-size:12px;line-height:16px;color:#3a3a3a;font-weight:normal;">8’122</div>
<svg style="position:absolute;left:1081px;top:407px;" width="15" height="13" viewBox="0 0 15 13"><path d="M6.6 1.5H0.75V10.5H10.5V7" fill="none" stroke="#4fa14f" stroke-width="1.5"/><path d="M3.9 8.6L4.6 6L10.9 -0.3L13.3 2.1L7 8.4Z" fill="#4fa14f"/></svg>
<div class="t" style="left:14px;top:434.84px;font-size:12px;line-height:16px;color:#3a3a3a;font-weight:normal;letter-spacing:-0.05px;">Bu08</div>
<div class="t" style="left:64px;top:434.84px;font-size:12px;line-height:16px;color:#3a3a3a;font-weight:normal;letter-spacing:-0.05px;">Bulverde</div>
<div class="t" style="left:209px;top:434.84px;font-size:12px;line-height:16px;color:#3a3a3a;font-weight:normal;letter-spacing:-0.05px;">Project Management</div>
<div class="t" style="left:377px;top:434.84px;font-size:12px;line-height:16px;color:#3a3a3a;font-weight:normal;letter-spacing:-0.05px;">D23</div>
<svg style="position:absolute;left:455px;top:434px;" width="48" height="14" viewBox="0 0 48 14"><rect x="0" y="0" width="48" height="14" rx="7" fill="#2d2d2d"/><circle cx="10" cy="7" r="6" fill="#57b947"/><circle cx="25" cy="7" r="6" fill="#111"/><circle cx="40" cy="7" r="6" fill="#111"/></svg>
<svg style="position:absolute;left:558px;top:434px;" width="48" height="14" viewBox="0 0 48 14"><rect x="0" y="0" width="48" height="14" rx="7" fill="#2d2d2d"/><circle cx="10" cy="7" r="6" fill="#57b947"/><circle cx="25" cy="7" r="6" fill="#111"/><circle cx="40" cy="7" r="6" fill="#111"/></svg>
<svg style="position:absolute;left:676px;top:434px;" width="48" height="14" viewBox="0 0 48 14"><rect x="0" y="0" width="48" height="14" rx="7" fill="#2d2d2d"/><circle cx="10" cy="7" r="6" fill="#57b947"/><circle cx="25" cy="7" r="6" fill="#111"/><circle cx="40" cy="7" r="6" fill="#111"/></svg>
<div class="t" style="left:752px;width:40px;text-align:right;top:434.84px;font-size:12px;line-height:16px;color:#3a3a3a;font-weight:normal;">11</div>
<div class="t" style="left:796px;width:60px;text-align:right;top:434.84px;font-size:12px;line-height:16px;color:#3a3a3a;font-weight:normal;">40’000</div>
<div class="t" style="left:873px;width:80px;text-align:right;top:434.84px;font-size:12px;line-height:16px;color:#3a3a3a;font-weight:normal;">40’000</div>
<div class="t" style="left:956px;width:80px;text-align:right;top:434.84px;font-size:12px;line-height:16px;color:#3a3a3a;font-weight:normal;">4’338</div>
<svg style="position:absolute;left:1081px;top:434px;" width="15" height="13" viewBox="0 0 15 13"><path d="M6.6 1.5H0.75V10.5H10.5V7" fill="none" stroke="#4fa14f" stroke-width="1.5"/><path d="M3.9 8.6L4.6 6L10.9 -0.3L13.3 2.1L7 8.4Z" fill="#4fa14f"/></svg>
<div class="t" style="left:14px;top:461.84px;font-size:12px;line-height:16px;color:#3a3a3a;font-weight:normal;letter-spacing:-0.05px;">Ea09</div>
<div class="t" style="left:64px;top:461.84px;font-size:12px;line-height:16px;color:#3a3a3a;font-weight:normal;letter-spacing:-0.05px;">Earley</div>
<div class="t" style="left:209px;top:461.84px;font-size:12px;line-height:16px;color:#3a3a3a;font-weight:normal;letter-spacing:-0.05px;">Construction Engineering</div>
<div class="t" style="left:377px;top:461.84px;font-size:12px;line-height:16px;color:#3a3a3a;font-weight:normal;letter-spacing:-0.05px;">B30</div>
<svg style="position:absolute;left:455px;top:461px;" width="48" height="14" viewBox="0 0 48 14"><rect x="0" y="0" width="48" height="14" rx="7" fill="#2d2d2d"/><circle cx="10" cy="7" r="6" fill="#57b947"/><circle cx="25" cy="7" r="6" fill="#111"/><circle cx="40" cy="7" r="6" fill="#111"/></svg>
<svg style="position:absolute;left:558px;top:461px;" width="48" height="14" viewBox="0 0 48 14"><rect x="0" y="0" width="48" height="14" rx="7" fill="#2d2d2d"/><circle cx="10" cy="7" r="6" fill="#111"/><circle cx="25" cy="7" r="6" fill="#111"/><circle cx="40" cy="7" r="6" fill="#f23030"/></svg>
<svg style="position:absolute;left:676px;top:461px;" width="48" height="14" viewBox="0 0 48 14"><rect x="0" y="0" width="48" height="14" rx="7" fill="#2d2d2d"/><circle cx="10" cy="7" r="6" fill="#57b947"/><circle cx="25" cy="7" r="6" fill="#111"/><circle cx="40" cy="7" r="6" fill="#111"/></svg>
<div class="t" style="left:752px;width:40px;text-align:right;top:461.84px;font-size:12px;line-height:16px;color:#3a3a3a;font-weight:normal;">40</div>
<div class="t" style="left:796px;width:60px;text-align:right;top:461.84px;font-size:12px;line-height:16px;color:#3a3a3a;font-weight:normal;">24’500</div>
<div class="t" style="left:873px;width:80px;text-align:right;top:461.84px;font-size:12px;line-height:16px;color:#3a3a3a;font-weight:normal;">24’500</div>
<div class="t" style="left:956px;width:80px;text-align:right;top:461.84px;font-size:12px;line-height:16px;color:#3a3a3a;font-weight:normal;">9’755</div>
<svg style="position:absolute;left:1081px;top:461px;" width="15" height="13" viewBox="0 0 15 13"><path d="M6.6 1.5H0.75V10.5H10.5V7" fill="none" stroke="#4fa14f" stroke-width="1.5"/><path d="M3.9 8.6L4.6 6L10.9 -0.3L13.3 2.1L7 8.4Z" fill="#4fa14f"/></svg>
<div class="t" style="left:14px;top:488.84px;font-size:12px;line-height:16px;color:#3a3a3a;font-weight:normal;letter-spacing:-0.05px;">Ge10</div>
<div class="t" style="left:64px;top:488.84px;font-size:12px;line-height:16px;color:#3a3a3a;font-weight:normal;letter-spacing:-0.05px;">Georgetown</div>
<div class="t" style="left:209px;top:488.84px;font-size:12px;line-height:16px;color:#3a3a3a;font-weight:normal;letter-spacing:-0.05px;">Airports</div>
<div class="t" style="left:377px;top:488.84px;font-size:12px;line-height:16px;color:#3a3a3a;font-weight:normal;letter-spacing:-0.05px;">B11</div>
<svg style="position:absolute;left:455px;top:488px;" width="48" height="14" viewBox="0 0 48 14"><rect x="0" y="0" width="48" height="14" rx="7" fill="#2d2d2d"/><circle cx="10" cy="7" r="6" fill="#57b947"/><circle cx="25" cy="7" r="6" fill="#111"/><circle cx="40" cy="7" r="6" fill="#111"/></svg>
<svg style="position:absolute;left:558px;top:488px;" width="48" height="14" viewBox="0 0 48 14"><rect x="0" y="0" width="48" height="14" rx="7" fill="#2d2d2d"/><circle cx="10" cy="7" r="6" fill="#57b947"/><circle cx="25" cy="7" r="6" fill="#111"/><circle cx="40" cy="7" r="6" fill="#111"/></svg>
<svg style="position:absolute;left:676px;top:488px;" width="48" height="14" viewBox="0 0 48 14"><rect x="0" y="0" width="48" height="14" rx="7" fill="#2d2d2d"/><circle cx="10" cy="7" r="6" fill="#57b947"/><circle cx="25" cy="7" r="6" fill="#111"/><circle cx="40" cy="7" r="6" fill="#111"/></svg>
<div class="t" style="left:752px;width:40px;text-align:right;top:488.84px;font-size:12px;line-height:16px;color:#3a3a3a;font-weight:normal;">0</div>
<div class="t" style="left:796px;width:60px;text-align:right;top:488.84px;font-size:12px;line-height:16px;color:#3a3a3a;font-weight:normal;">500</div>
<div class="t" style="left:873px;width:80px;text-align:right;top:488.84px;font-size:12px;line-height:16px;color:#3a3a3a;font-weight:normal;">500</div>
<div class="t" style="left:956px;width:80px;text-align:right;top:488.84px;font-size:12px;line-height:16px;color:#3a3a3a;font-weight:normal;">0</div>
<svg style="position:absolute;left:1081px;top:488px;" width="15" height="13" viewBox="0 0 15 13"><path d="M6.6 1.5H0.75V10.5H10.5V7" fill="none" stroke="#4fa14f" stroke-width="1.5"/><path d="M3.9 8.6L4.6 6L10.9 -0.3L13.3 2.1L7 8.4Z" fill="#4fa14f"/></svg>
<div class="t" style="left:14px;top:515.84px;font-size:12px;line-height:16px;color:#3a3a3a;font-weight:normal;letter-spacing:-0.05px;">Cr11</div>
<div class="t" style="left:64px;top:515.84px;font-size:12px;line-height:16px;color:#3a3a3a;font-weight:normal;letter-spacing:-0.05px;">Crowborough</div>
<div class="t" style="left:209px;top:515.84px;font-size:12px;line-height:16px;color:#3a3a3a;font-weight:normal;letter-spacing:-0.05px;">Industrial Engineering</div>
<div class="t" style="left:377px;top:515.84px;font-size:12px;line-height:16px;color:#3a3a3a;font-weight:normal;letter-spacing:-0.05px;">D62</div>
<svg style="position:absolute;left:455px;top:515px;" width="48" height="14" viewBox="0 0 48 14"><rect x="0" y="0" width="48" height="14" rx="7" fill="#2d2d2d"/><circle cx="10" cy="7" r="6" fill="#57b947"/><circle cx="25" cy="7" r="6" fill="#111"/><circle cx="40" cy="7" r="6" fill="#111"/></svg>
<svg style="position:absolute;left:558px;top:515px;" width="48" height="14" viewBox="0 0 48 14"><rect x="0" y="0" width="48" height="14" rx="7" fill="#2d2d2d"/><circle cx="10" cy="7" r="6" fill="#57b947"/><circle cx="25" cy="7" r="6" fill="#111"/><circle cx="40" cy="7" r="6" fill="#111"/></svg>
<svg style="position:absolute;left:676px;top:515px;" width="48" height="14" viewBox="0 0 48 14"><rect x="0" y="0" width="48" height="14" rx="7" fill="#2d2d2d"/><circle cx="10" cy="7" r="6" fill="#57b947"/><circle cx="25" cy="7" r="6" fill="#111"/><circle cx="40" cy="7" r="6" fill="#111"/></svg>
<div class="t" style="left:752px;width:40px;text-align:right;top:515.84px;font-size:12px;line-height:16px;color:#3a3a3a;font-weight:normal;">63</div>
<div class="t" style="left:796px;width:60px;text-align:right;top:515.84px;font-size:12px;line-height:16px;color:#3a3a3a;font-weight:normal;">4’500</div>
<div class="t" style="left:873px;width:80px;text-align:right;top:515.84px;font-size:12px;line-height:16px;color:#3a3a3a;font-weight:normal;">4’500</div>
<div class="t" style="left:956px;width:80px;text-align:right;top:515.84px;font-size:12px;line-height:16px;color:#3a3a3a;font-weight:normal;">2’836</div>
<svg style="position:absolute;left:1081px;top:515px;" width="15" height="13" viewBox="0 0 15 13"><path d="M6.6 1.5H0.75V10.5H10.5V7" fill="none" stroke="#4fa14f" stroke-width="1.5"/><path d="M3.9 8.6L4.6 6L10.9 -0.3L13.3 2.1L7 8.4Z" fill="#4fa14f"/></svg>
<div class="t" style="left:14px;top:542.84px;font-size:12px;line-height:16px;color:#3a3a3a;font-weight:normal;letter-spacing:-0.05px;">Gi12</div>
<div class="t" style="left:64px;top:542.84px;font-size:12px;line-height:16px;color:#3a3a3a;font-weight:normal;letter-spacing:-0.05px;">Gillingham (Kent)</div>
<div class="t" style="left:209px;top:542.84px;font-size:12px;line-height:16px;color:#3a3a3a;font-weight:normal;letter-spacing:-0.05px;">Helthcare Solutions</div>
<div class="t" style="left:377px;top:542.84px;font-size:12px;line-height:16px;color:#3a3a3a;font-weight:normal;letter-spacing:-0.05px;">B30</div>
<svg style="position:absolute;left:455px;top:542px;" width="48" height="14" viewBox="0 0 48 14"><rect x="0" y="0" width="48" height="14" rx="7" fill="#2d2d2d"/><circle cx="10" cy="7" r="6" fill="#57b947"/><circle cx="25" cy="7" r="6" fill="#111"/><circle cx="40" cy="7" r="6" fill="#111"/></svg>
<svg style="position:absolute;left:558px;top:542px;" width="48" height="14" viewBox="0 0 48 14"><rect x="0" y="0" width="48" height="14" rx="7" fill="#2d2d2d"/><circle cx="10" cy="7" r="6" fill="#57b947"/><circle cx="25" cy="7" r="6" fill="#111"/><circle cx="40" cy="7" r="6" fill="#111"/></svg>
<svg style="position:absolute;left:676px;top:542px;" width="48" height="14" viewBox="0 0 48 14"><rect x="0" y="0" width="48" height="14" rx="7" fill="#2d2d2d"/><circle cx="10" cy="7" r="6" fill="#57b947"/><circle cx="25" cy="7" r="6" fill="#111"/><circle cx="40" cy="7" r="6" fill="#111"/></svg>
<div class="t" style="left:752px;width:40px;text-align:right;top:542.84px;font-size:12px;line-height:16px;color:#3a3a3a;font-weight:normal;">13</div>
<div class="t" style="left:796px;width:60px;text-align:right;top:542.84px;font-size:12px;line-height:16px;color:#3a3a3a;font-weight:normal;">14’500</div>
<div class="t" style="left:873px;width:80px;text-align:right;top:542.84px;font-size:12px;line-height:16px;color:#3a3a3a;font-weight:normal;">14’500</div>
<div class="t" style="left:956px;width:80px;text-align:right;top:542.84px;font-size:12px;line-height:16px;color:#3a3a3a;font-weight:normal;">1’906</div>
<svg style="position:absolute;left:1081px;top:542px;" width="15" height="13" viewBox="0 0 15 13"><path d="M6.6 1.5H0.75V10.5H10.5V7" fill="none" stroke="#4fa14f" stroke-width="1.5"/><path d="M3.9 8.6L4.6 6L10.9 -0.3L13.3 2.1L7 8.4Z" fill="#4fa14f"/></svg>
<div class="t" style="left:14px;top:569.84px;font-size:12px;line-height:16px;color:#3a3a3a;font-weight:normal;letter-spacing:-0.05px;">Fa13</div>
<div class="t" style="left:64px;top:569.84px;font-size:12px;line-height:16px;color:#3a3a3a;font-weight:normal;letter-spacing:-0.05px;">Fayette</div>
<div class="t" style="left:209px;top:569.84px;font-size:12px;line-height:16px;color:#3a3a3a;font-weight:normal;letter-spacing:-0.05px;">Construction Engineering</div>
<div class="t" style="left:377px;top:569.84px;font-size:12px;line-height:16px;color:#3a3a3a;font-weight:normal;letter-spacing:-0.05px;">B30</div>
<svg style="position:absolute;left:455px;top:569px;" width="48" height="14" viewBox="0 0 48 14"><rect x="0" y="0" width="48" height="14" rx="7" fill="#2d2d2d"/><circle cx="10" cy="7" r="6" fill="#57b947"/><circle cx="25" cy="7" r="6" fill="#111"/><circle cx="40" cy="7" r="6" fill="#111"/></svg>
<svg style="position:absolute;left:558px;top:569px;" width="48" height="14" viewBox="0 0 48 14"><rect x="0" y="0" width="48" height="14" rx="7" fill="#2d2d2d"/><circle cx="10" cy="7" r="6" fill="#57b947"/><circle cx="25" cy="7" r="6" fill="#111"/><circle cx="40" cy="7" r="6" fill="#111"/></svg>
<svg style="position:absolute;left:676px;top:569px;" width="48" height="14" viewBox="0 0 48 14"><rect x="0" y="0" width="48" height="14" rx="7" fill="#2d2d2d"/><circle cx="10" cy="7" r="6" fill="#57b947"/><circle cx="25" cy="7" r="6" fill="#111"/><circle cx="40" cy="7" r="6" fill="#111"/></svg>
<div class="t" style="left:752px;width:40px;text-align:right;top:569.84px;font-size:12px;line-height:16px;color:#3a3a3a;font-weight:normal;">0</div>
<div class="t" style="left:796px;width:60px;text-align:right;top:569.84px;font-size:12px;line-height:16px;color:#3a3a3a;font-weight:normal;">500</div>
<div class="t" style="left:873px;width:80px;text-align:right;top:569.84px;font-size:12px;line-height:16px;color:#3a3a3a;font-weight:normal;">500</div>
<div class="t" style="left:956px;width:80px;text-align:right;top:569.84px;font-size:12px;line-height:16px;color:#3a3a3a;font-weight:normal;">0</div>
<svg style="position:absolute;left:1081px;top:569px;" width="15" height="13" viewBox="0 0 15 13"><path d="M6.6 1.5H0.75V10.5H10.5V7" fill="none" stroke="#4fa14f" stroke-width="1.5"/><path d="M3.9 8.6L4.6 6L10.9 -0.3L13.3 2.1L7 8.4Z" fill="#4fa14f"/></svg>
<div class="t" style="left:14px;top:596.84px;font-size:12px;line-height:16px;color:#3a3a3a;font-weight:normal;letter-spacing:-0.05px;">Ri14</div>
<div class="t" style="left:64px;top:596.84px;font-size:12px;line-height:16px;color:#3a3a3a;font-weight:normal;letter-spacing:-0.05px;">Ripley</div>
<div class="t" style="left:209px;top:596.84px;font-size:12px;line-height:16px;color:#3a3a3a;font-weight:normal;letter-spacing:-0.05px;">Industrial Engineering</div>
<div class="t" style="left:377px;top:596.84px;font-size:12px;line-height:16px;color:#3a3a3a;font-weight:normal;letter-spacing:-0.05px;">B30</div>
<svg style="position:absolute;left:455px;top:596px;" width="48" height="14" viewBox="0 0 48 14"><rect x="0" y="0" width="48" height="14" rx="7" fill="#2d2d2d"/><circle cx="10" cy="7" r="6" fill="#57b947"/><circle cx="25" cy="7" r="6" fill="#111"/><circle cx="40" cy="7" r="6" fill="#111"/></svg>
<svg style="position:absolute;left:558px;top:596px;" width="48" height="14" viewBox="0 0 48 14"><rect x="0" y="0" width="48" height="14" rx="7" fill="#2d2d2d"/><circle cx="10" cy="7" r="6" fill="#57b947"/><circle cx="25" cy="7" r="6" fill="#111"/><circle cx="40" cy="7" r="6" fill="#111"/></svg>
<svg style="position:absolute;left:676px;top:596px;" width="48" height="14" viewBox="0 0 48 14"><rect x="0" y="0" width="48" height="14" rx="7" fill="#2d2d2d"/><circle cx="10" cy="7" r="6" fill="#57b947"/><circle cx="25" cy="7" r="6" fill="#111"/><circle cx="40" cy="7" r="6" fill="#111"/></svg>
<div class="t" style="left:752px;width:40px;text-align:right;top:596.84px;font-size:12px;line-height:16px;color:#3a3a3a;font-weight:normal;">56</div>
<div class="t" style="left:796px;width:60px;text-align:right;top:596.84px;font-size:12px;line-height:16px;color:#3a3a3a;font-weight:normal;">1’500</div>
<div class="t" style="left:873px;width:80px;text-align:right;top:596.84px;font-size:12px;line-height:16px;color:#3a3a3a;font-weight:normal;">1’500</div>
<div class="t" style="left:956px;width:80px;text-align:right;top:596.84px;font-size:12px;line-height:16px;color:#3a3a3a;font-weight:normal;">839</div>
<svg style="position:absolute;left:1081px;top:596px;" width="15" height="13" viewBox="0 0 15 13"><path d="M6.6 1.5H0.75V10.5H10.5V7" fill="none" stroke="#4fa14f" stroke-width="1.5"/><path d="M3.9 8.6L4.6 6L10.9 -0.3L13.3 2.1L7 8.4Z" fill="#4fa14f"/></svg>
<div class="t" style="left:14px;top:623.84px;font-size:12px;line-height:16px;color:#3a3a3a;font-weight:normal;letter-spacing:-0.05px;">Fr15</div>
<div class="t" style="left:64px;top:623.84px;font-size:12px;line-height:16px;color:#3a3a3a;font-weight:normal;letter-spacing:-0.05px;">Fremont</div>
<div class="t" style="left:209px;top:623.84px;font-size:12px;line-height:16px;color:#3a3a3a;font-weight:normal;letter-spacing:-0.05px;">Construction Engineering</div>
<div class="t" style="left:377px;top:623.84px;font-size:12px;line-height:16px;color:#3a3a3a;font-weight:normal;letter-spacing:-0.05px;">B30</div>
<svg style="position:absolute;left:455px;top:623px;" width="48" height="14" viewBox="0 0 48 14"><rect x="0" y="0" width="48" height="14" rx="7" fill="#2d2d2d"/><circle cx="10" cy="7" r="6" fill="#57b947"/><circle cx="25" cy="7" r="6" fill="#111"/><circle cx="40" cy="7" r="6" fill="#111"/></svg>
<svg style="position:absolute;left:558px;top:623px;" width="48" height="14" viewBox="0 0 48 14"><rect x="0" y="0" width="48" height="14" rx="7" fill="#2d2d2d"/><circle cx="10" cy="7" r="6" fill="#57b947"/><circle cx="25" cy="7" r="6" fill="#111"/><circle cx="40" cy="7" r="6" fill="#111"/></svg>
<svg style="position:absolute;left:676px;top:623px;" width="48" height="14" viewBox="0 0 48 14"><rect x="0" y="0" width="48" height="14" rx="7" fill="#2d2d2d"/><circle cx="10" cy="7" r="6" fill="#57b947"/><circle cx="25" cy="7" r="6" fill="#111"/><circle cx="40" cy="7" r="6" fill="#111"/></svg>
<div class="t" style="left:752px;width:40px;text-align:right;top:623.84px;font-size:12px;line-height:16px;color:#3a3a3a;font-weight:normal;">0</div>
<div class="t" style="left:796px;width:60px;text-align:right;top:623.84px;font-size:12px;line-height:16px;color:#3a3a3a;font-weight:normal;">500</div>
<div class="t" style="left:873px;width:80px;text-align:right;top:623.84px;font-size:12px;line-height:16px;color:#3a3a3a;font-weight:normal;">500</div>
<div class="t" style="left:956px;width:80px;text-align:right;top:623.84px;font-size:12px;line-height:16px;color:#3a3a3a;font-weight:normal;">0</div>
<svg style="position:absolute;left:1081px;top:623px;" width="15" height="13" viewBox="0 0 15 13"><path d="M6.6 1.5H0.75V10.5H10.5V7" fill="none" stroke="#4fa14f" stroke-width="1.5"/><path d="M3.9 8.6L4.6 6L10.9 -0.3L13.3 2.1L7 8.4Z" fill="#4fa14f"/></svg>
<div class="t" style="left:14px;top:650.84px;font-size:12px;line-height:16px;color:#3a3a3a;font-weight:normal;letter-spacing:-0.05px;">Ma16</div>
<div class="t" style="left:64px;top:650.84px;font-size:12px;line-height:16px;color:#3a3a3a;font-weight:normal;letter-spacing:-0.05px;">Mansfield Woodhouse</div>
<div class="t" style="left:209px;top:650.84px;font-size:12px;line-height:16px;color:#3a3a3a;font-weight:normal;letter-spacing:-0.05px;">Renewable Energy</div>
<div class="t" style="left:377px;top:650.84px;font-size:12px;line-height:16px;color:#3a3a3a;font-weight:normal;letter-spacing:-0.05px;">A23</div>
<svg style="position:absolute;left:455px;top:650px;" width="48" height="14" viewBox="0 0 48 14"><rect x="0" y="0" width="48" height="14" rx="7" fill="#2d2d2d"/><circle cx="10" cy="7" r="6" fill="#57b947"/><circle cx="25" cy="7" r="6" fill="#111"/><circle cx="40" cy="7" r="6" fill="#111"/></svg>
<svg style="position:absolute;left:558px;top:650px;" width="48" height="14" viewBox="0 0 48 14"><rect x="0" y="0" width="48" height="14" rx="7" fill="#2d2d2d"/><circle cx="10" cy="7" r="6" fill="#57b947"/><circle cx="25" cy="7" r="6" fill="#111"/><circle cx="40" cy="7" r="6" fill="#111"/></svg>
<svg style="position:absolute;left:676px;top:650px;" width="48" height="14" viewBox="0 0 48 14"><rect x="0" y="0" width="48" height="14" rx="7" fill="#2d2d2d"/><circle cx="10" cy="7" r="6" fill="#57b947"/><circle cx="25" cy="7" r="6" fill="#111"/><circle cx="40" cy="7" r="6" fill="#111"/></svg>
<div class="t" style="left:752px;width:40px;text-align:right;top:650.84px;font-size:12px;line-height:16px;color:#3a3a3a;font-weight:normal;">0</div>
<div class="t" style="left:796px;width:60px;text-align:right;top:650.84px;font-size:12px;line-height:16px;color:#3a3a3a;font-weight:normal;">14’500</div>
<div class="t" style="left:873px;width:80px;text-align:right;top:650.84px;font-size:12px;line-height:16px;color:#3a3a3a;font-weight:normal;">14’500</div>
<div class="t" style="left:956px;width:80px;text-align:right;top:650.84px;font-size:12px;line-height:16px;color:#3a3a3a;font-weight:normal;">0</div>
<svg style="position:absolute;left:1081px;top:650px;" width="15" height="13" viewBox="0 0 15 13"><path d="M6.6 1.5H0.75V10.5H10.5V7" fill="none" stroke="#4fa14f" stroke-width="1.5"/><path d="M3.9 8.6L4.6 6L10.9 -0.3L13.3 2.1L7 8.4Z" fill="#4fa14f"/></svg>
<div class="t" style="left:14px;top:677.84px;font-size:12px;line-height:16px;color:#3a3a3a;font-weight:normal;letter-spacing:-0.05px;">Ke17</div>
<div class="t" style="left:64px;top:677.84px;font-size:12px;line-height:16px;color:#3a3a3a;font-weight:normal;letter-spacing:-0.05px;">Kennedale</div>
<div class="t" style="left:209px;top:677.84px;font-size:12px;line-height:16px;color:#3a3a3a;font-weight:normal;letter-spacing:-0.05px;">Water and Environment</div>
<div class="t" style="left:377px;top:677.84px;font-size:12px;line-height:16px;color:#3a3a3a;font-weight:normal;letter-spacing:-0.05px;">D62</div>
<svg style="position:absolute;left:455px;top:677px;" width="48" height="14" viewBox="0 0 48 14"><rect x="0" y="0" width="48" height="14" rx="7" fill="#2d2d2d"/><circle cx="10" cy="7" r="6" fill="#57b947"/><circle cx="25" cy="7" r="6" fill="#111"/><circle cx="40" cy="7" r="6" fill="#111"/></svg>
<svg style="position:absolute;left:558px;top:677px;" width="48" height="14" viewBox="0 0 48 14"><rect x="0" y="0" width="48" height="14" rx="7" fill="#2d2d2d"/><circle cx="10" cy="7" r="6" fill="#57b947"/><circle cx="25" cy="7" r="6" fill="#111"/><circle cx="40" cy="7" r="6" fill="#111"/></svg>
<svg style="position:absolute;left:676px;top:677px;" width="48" height="14" viewBox="0 0 48 14"><rect x="0" y="0" width="48" height="14" rx="7" fill="#2d2d2d"/><circle cx="10" cy="7" r="6" fill="#57b947"/><circle cx="25" cy="7" r="6" fill="#111"/><circle cx="40" cy="7" r="6" fill="#111"/></svg>
<div class="t" style="left:752px;width:40px;text-align:right;top:677.84px;font-size:12px;line-height:16px;color:#3a3a3a;font-weight:normal;">0</div>
<div class="t" style="left:796px;width:60px;text-align:right;top:677.84px;font-size:12px;line-height:16px;color:#3a3a3a;font-weight:normal;">500</div>
<div class="t" style="left:873px;width:80px;text-align:right;top:677.84px;font-size:12px;line-height:16px;color:#3a3a3a;font-weight:normal;">500</div>
<div class="t" style="left:956px;width:80px;text-align:right;top:677.84px;font-size:12px;line-height:16px;color:#3a3a3a;font-weight:normal;">0</div>
<svg style="position:absolute;left:1081px;top:677px;" width="15" height="13" viewBox="0 0 15 13"><path d="M6.6 1.5H0.75V10.5H10.5V7" fill="none" stroke="#4fa14f" stroke-width="1.5"/><path d="M3.9 8.6L4.6 6L10.9 -0.3L13.3 2.1L7 8.4Z" fill="#4fa14f"/></svg>
<div class="t" style="left:14px;top:704.84px;font-size:12px;line-height:16px;color:#3a3a3a;font-weight:normal;letter-spacing:-0.05px;">Ch18</div>
<div class="t" style="left:64px;top:704.84px;font-size:12px;line-height:16px;color:#3a3a3a;font-weight:normal;letter-spacing:-0.05px;">Cherry Valley</div>
<div class="t" style="left:209px;top:704.84px;font-size:12px;line-height:16px;color:#3a3a3a;font-weight:normal;letter-spacing:-0.05px;">Construction Supervision</div>
<div class="t" style="left:377px;top:704.84px;font-size:12px;line-height:16px;color:#3a3a3a;font-weight:normal;letter-spacing:-0.05px;">D62</div>
<svg style="position:absolute;left:455px;top:704px;" width="48" height="14" viewBox="0 0 48 14"><rect x="0" y="0" width="48" height="14" rx="7" fill="#2d2d2d"/><circle cx="10" cy="7" r="6" fill="#57b947"/><circle cx="25" cy="7" r="6" fill="#111"/><circle cx="40" cy="7" r="6" fill="#111"/></svg>
<svg style="position:absolute;left:558px;top:704px;" width="48" height="14" viewBox="0 0 48 14"><rect x="0" y="0" width="48" height="14" rx="7" fill="#2d2d2d"/><circle cx="10" cy="7" r="6" fill="#111"/><circle cx="25" cy="7" r="6" fill="#f0961e"/><circle cx="40" cy="7" r="6" fill="#111"/></svg>
<svg style="position:absolute;left:676px;top:704px;" width="48" height="14" viewBox="0 0 48 14"><rect x="0" y="0" width="48" height="14" rx="7" fill="#2d2d2d"/><circle cx="10" cy="7" r="6" fill="#57b947"/><circle cx="25" cy="7" r="6" fill="#111"/><circle cx="40" cy="7" r="6" fill="#111"/></svg>
<div class="t" style="left:752px;width:40px;text-align:right;top:704.84px;font-size:12px;line-height:16px;color:#3a3a3a;font-weight:normal;">33</div>
<div class="t" style="left:796px;width:60px;text-align:right;top:704.84px;font-size:12px;line-height:16px;color:#3a3a3a;font-weight:normal;">20’000</div>
<div class="t" style="left:873px;width:80px;text-align:right;top:704.84px;font-size:12px;line-height:16px;color:#3a3a3a;font-weight:normal;">20’000</div>
<div class="t" style="left:956px;width:80px;text-align:right;top:704.84px;font-size:12px;line-height:16px;color:#3a3a3a;font-weight:normal;">6’532</div>
<svg style="position:absolute;left:1081px;top:704px;" width="15" height="13" viewBox="0 0 15 13"><path d="M6.6 1.5H0.75V10.5H10.5V7" fill="none" stroke="#4fa14f" stroke-width="1.5"/><path d="M3.9 8.6L4.6 6L10.9 -0.3L13.3 2.1L7 8.4Z" fill="#4fa14f"/></svg>
<div class="t" style="left:14px;top:731.84px;font-size:12px;line-height:16px;color:#3a3a3a;font-weight:normal;letter-spacing:-0.05px;">Sc19</div>
<div class="t" style="left:64px;top:731.84px;font-size:12px;line-height:16px;color:#3a3a3a;font-weight:normal;letter-spacing:-0.05px;">Scarborough</div>
<div class="t" style="left:209px;top:731.84px;font-size:12px;line-height:16px;color:#3a3a3a;font-weight:normal;letter-spacing:-0.05px;">Construction Engineering</div>
<div class="t" style="left:377px;top:731.84px;font-size:12px;line-height:16px;color:#3a3a3a;font-weight:normal;letter-spacing:-0.05px;">B21</div>
<svg style="position:absolute;left:455px;top:731px;" width="48" height="14" viewBox="0 0 48 14"><rect x="0" y="0" width="48" height="14" rx="7" fill="#2d2d2d"/><circle cx="10" cy="7" r="6" fill="#57b947"/><circle cx="25" cy="7" r="6" fill="#111"/><circle cx="40" cy="7" r="6" fill="#111"/></svg>
<svg style="position:absolute;left:558px;top:731px;" width="48" height="14" viewBox="0 0 48 14"><rect x="0" y="0" width="48" height="14" rx="7" fill="#2d2d2d"/><circle cx="10" cy="7" r="6" fill="#57b947"/><circle cx="25" cy="7" r="6" fill="#111"/><circle cx="40" cy="7" r="6" fill="#111"/></svg>
<svg style="position:absolute;left:676px;top:731px;" width="48" height="14" viewBox="0 0 48 14"><rect x="0" y="0" width="48" height="14" rx="7" fill="#2d2d2d"/><circle cx="10" cy="7" r="6" fill="#57b947"/><circle cx="25" cy="7" r="6" fill="#111"/><circle cx="40" cy="7" r="6" fill="#111"/></svg>
<div class="t" style="left:752px;width:40px;text-align:right;top:731.84px;font-size:12px;line-height:16px;color:#3a3a3a;font-weight:normal;">15</div>
<div class="t" style="left:796px;width:60px;text-align:right;top:731.84px;font-size:12px;line-height:16px;color:#3a3a3a;font-weight:normal;">35’000</div>
<div class="t" style="left:873px;width:80px;text-align:right;top:731.84px;font-size:12px;line-height:16px;color:#3a3a3a;font-weight:normal;">35’000</div>
<div class="t" style="left:956px;width:80px;text-align:right;top:731.84px;font-size:12px;line-height:16px;color:#3a3a3a;font-weight:normal;">5’323</div>
<svg style="position:absolute;left:1081px;top:731px;" width="15" height="13" viewBox="0 0 15 13"><path d="M6.6 1.5H0.75V10.5H10.5V7" fill="none" stroke="#4fa14f" stroke-width="1.5"/><path d="M3.9 8.6L4.6 6L10.9 -0.3L13.3 2.1L7 8.4Z" fill="#4fa14f"/></svg>
<div class="t" style="left:14px;top:758.84px;font-size:12px;line-height:16px;color:#3a3a3a;font-weight:normal;letter-spacing:-0.05px;">Pl20</div>
<div class="t" style="left:64px;top:758.84px;font-size:12px;line-height:16px;color:#3a3a3a;font-weight:normal;letter-spacing:-0.05px;">Plymouth</div>
<div class="t" style="left:209px;top:758.84px;font-size:12px;line-height:16px;color:#3a3a3a;font-weight:normal;letter-spacing:-0.05px;">Construction Supervision</div>
<div class="t" style="left:377px;top:758.84px;font-size:12px;line-height:16px;color:#3a3a3a;font-weight:normal;letter-spacing:-0.05px;">D62</div>
<svg style="position:absolute;left:455px;top:758px;" width="48" height="14" viewBox="0 0 48 14"><rect x="0" y="0" width="48" height="14" rx="7" fill="#2d2d2d"/><circle cx="10" cy="7" r="6" fill="#57b947"/><circle cx="25" cy="7" r="6" fill="#111"/><circle cx="40" cy="7" r="6" fill="#111"/></svg>
<svg style="position:absolute;left:558px;top:758px;" width="48" height="14" viewBox="0 0 48 14"><rect x="0" y="0" width="48" height="14" rx="7" fill="#2d2d2d"/><circle cx="10" cy="7" r="6" fill="#57b947"/><circle cx="25" cy="7" r="6" fill="#111"/><circle cx="40" cy="7" r="6" fill="#111"/></svg>
<svg style="position:absolute;left:676px;top:758px;" width="48" height="14" viewBox="0 0 48 14"><rect x="0" y="0" width="48" height="14" rx="7" fill="#2d2d2d"/><circle cx="10" cy="7" r="6" fill="#57b947"/><circle cx="25" cy="7" r="6" fill="#111"/><circle cx="40" cy="7" r="6" fill="#111"/></svg>
<div class="t" style="left:752px;width:40px;text-align:right;top:758.84px;font-size:12px;line-height:16px;color:#3a3a3a;font-weight:normal;">0</div>
<div class="t" style="left:796px;width:60px;text-align:right;top:758.84px;font-size:12px;line-height:16px;color:#3a3a3a;font-weight:normal;">1’000</div>
<div class="t" style="left:873px;width:80px;text-align:right;top:758.84px;font-size:12px;line-height:16px;color:#3a3a3a;font-weight:normal;">1’000</div>
<div class="t" style="left:956px;width:80px;text-align:right;top:758.84px;font-size:12px;line-height:16px;color:#3a3a3a;font-weight:normal;">0</div>
<svg style="position:absolute;left:1081px;top:758px;" width="15" height="13" viewBox="0 0 15 13"><path d="M6.6 1.5H0.75V10.5H10.5V7" fill="none" stroke="#4fa14f" stroke-width="1.5"/><path d="M3.9 8.6L4.6 6L10.9 -0.3L13.3 2.1L7 8.4Z" fill="#4fa14f"/></svg>
<div class="t" style="left:14px;top:785.84px;font-size:12px;line-height:16px;color:#3a3a3a;font-weight:normal;letter-spacing:-0.05px;">Ca21</div>
<div class="t" style="left:64px;top:785.84px;font-size:12px;line-height:16px;color:#3a3a3a;font-weight:normal;letter-spacing:-0.05px;">Carrabelle</div>
<div class="t" style="left:209px;top:785.84px;font-size:12px;line-height:16px;color:#3a3a3a;font-weight:normal;letter-spacing:-0.05px;">Project Management</div>
<div class="t" style="left:377px;top:785.84px;font-size:12px;line-height:16px;color:#3a3a3a;font-weight:normal;letter-spacing:-0.05px;">B21</div>
<svg style="position:absolute;left:455px;top:785px;" width="48" height="14" viewBox="0 0 48 14"><rect x="0" y="0" width="48" height="14" rx="7" fill="#2d2d2d"/><circle cx="10" cy="7" r="6" fill="#57b947"/><circle cx="25" cy="7" r="6" fill="#111"/><circle cx="40" cy="7" r="6" fill="#111"/></svg>
<svg style="position:absolute;left:558px;top:785px;" width="48" height="14" viewBox="0 0 48 14"><rect x="0" y="0" width="48" height="14" rx="7" fill="#2d2d2d"/><circle cx="10" cy="7" r="6" fill="#111"/><circle cx="25" cy="7" r="6" fill="#111"/><circle cx="40" cy="7" r="6" fill="#f23030"/></svg>
<svg style="position:absolute;left:676px;top:785px;" width="48" height="14" viewBox="0 0 48 14"><rect x="0" y="0" width="48" height="14" rx="7" fill="#2d2d2d"/><circle cx="10" cy="7" r="6" fill="#57b947"/><circle cx="25" cy="7" r="6" fill="#111"/><circle cx="40" cy="7" r="6" fill="#111"/></svg>
<div class="t" style="left:752px;width:40px;text-align:right;top:785.84px;font-size:12px;line-height:16px;color:#3a3a3a;font-weight:normal;">14</div>
<div class="t" style="left:796px;width:60px;text-align:right;top:785.84px;font-size:12px;line-height:16px;color:#3a3a3a;font-weight:normal;">73’500</div>
<div class="t" style="left:873px;width:80px;text-align:right;top:785.84px;font-size:12px;line-height:16px;color:#3a3a3a;font-weight:normal;">73’500</div>
<div class="t" style="left:956px;width:80px;text-align:right;top:785.84px;font-size:12px;line-height:16px;color:#3a3a3a;font-weight:normal;">10’235</div>
<svg style="position:absolute;left:1081px;top:785px;" width="15" height="13" viewBox="0 0 15 13"><path d="M6.6 1.5H0.75V10.5H10.5V7" fill="none" stroke="#4fa14f" stroke-width="1.5"/><path d="M3.9 8.6L4.6 6L10.9 -0.3L13.3 2.1L7 8.4Z" fill="#4fa14f"/></svg>
<div class="t" style="left:14px;top:812.84px;font-size:12px;line-height:16px;color:#3a3a3a;font-weight:normal;letter-spacing:-0.05px;">Ro22</div>
<div class="t" style="left:64px;top:812.84px;font-size:12px;line-height:16px;color:#3a3a3a;font-weight:normal;letter-spacing:-0.05px;">Round Rock</div>
<div class="t" style="left:209px;top:812.84px;font-size:12px;line-height:16px;color:#3a3a3a;font-weight:normal;letter-spacing:-0.05px;">Industrial Engineering</div>
<div class="t" style="left:377px;top:812.84px;font-size:12px;line-height:16px;color:#3a3a3a;font-weight:normal;letter-spacing:-0.05px;">D62</div>
<svg style="position:absolute;left:455px;top:812px;" width="48" height="14" viewBox="0 0 48 14"><rect x="0" y="0" width="48" height="14" rx="7" fill="#2d2d2d"/><circle cx="10" cy="7" r="6" fill="#57b947"/><circle cx="25" cy="7" r="6" fill="#111"/><circle cx="40" cy="7" r="6" fill="#111"/></svg>
<svg style="position:absolute;left:558px;top:812px;" width="48" height="14" viewBox="0 0 48 14"><rect x="0" y="0" width="48" height="14" rx="7" fill="#2d2d2d"/><circle cx="10" cy="7" r="6" fill="#111"/><circle cx="25" cy="7" r="6" fill="#111"/><circle cx="40" cy="7" r="6" fill="#f23030"/></svg>
<svg style="position:absolute;left:676px;top:812px;" width="48" height="14" viewBox="0 0 48 14"><rect x="0" y="0" width="48" height="14" rx="7" fill="#2d2d2d"/><circle cx="10" cy="7" r="6" fill="#111"/><circle cx="25" cy="7" r="6" fill="#f0961e"/><circle cx="40" cy="7" r="6" fill="#111"/></svg>
<div class="t" style="left:752px;width:40px;text-align:right;top:812.84px;font-size:12px;line-height:16px;color:#3a3a3a;font-weight:normal;">37</div>
<div class="t" style="left:796px;width:60px;text-align:right;top:812.84px;font-size:12px;line-height:16px;color:#3a3a3a;font-weight:normal;">86’000</div>
<div class="t" style="left:873px;width:80px;text-align:right;top:812.84px;font-size:12px;line-height:16px;color:#3a3a3a;font-weight:normal;">86’000</div>
<div class="t" style="left:956px;width:80px;text-align:right;top:812.84px;font-size:12px;line-height:16px;color:#3a3a3a;font-weight:normal;">32’214</div>
<svg style="position:absolute;left:1081px;top:812px;" width="15" height="13" viewBox="0 0 15 13"><path d="M6.6 1.5H0.75V10.5H10.5V7" fill="none" stroke="#4fa14f" stroke-width="1.5"/><path d="M3.9 8.6L4.6 6L10.9 -0.3L13.3 2.1L7 8.4Z" fill="#4fa14f"/></svg>
<div class="t" style="left:14px;top:839.84px;font-size:12px;line-height:16px;color:#3a3a3a;font-weight:normal;letter-spacing:-0.05px;">No23</div>
<div class="t" style="left:64px;top:839.84px;font-size:12px;line-height:16px;color:#3a3a3a;font-weight:normal;letter-spacing:-0.05px;">North Bay Village</div>
<div class="t" style="left:209px;top:839.84px;font-size:12px;line-height:16px;color:#3a3a3a;font-weight:normal;letter-spacing:-0.05px;">Construction Supervision</div>
<div class="t" style="left:377px;top:839.84px;font-size:12px;line-height:16px;color:#3a3a3a;font-weight:normal;letter-spacing:-0.05px;">D62</div>
<svg style="position:absolute;left:455px;top:839px;" width="48" height="14" viewBox="0 0 48 14"><rect x="0" y="0" width="48" height="14" rx="7" fill="#2d2d2d"/><circle cx="10" cy="7" r="6" fill="#57b947"/><circle cx="25" cy="7" r="6" fill="#111"/><circle cx="40" cy="7" r="6" fill="#111"/></svg>
<svg style="position:absolute;left:558px;top:839px;" width="48" height="14" viewBox="0 0 48 14"><rect x="0" y="0" width="48" height="14" rx="7" fill="#2d2d2d"/><circle cx="10" cy="7" r="6" fill="#57b947"/><circle cx="25" cy="7" r="6" fill="#111"/><circle cx="40" cy="7" r="6" fill="#111"/></svg>
<svg style="position:absolute;left:676px;top:839px;" width="48" height="14" viewBox="0 0 48 14"><rect x="0" y="0" width="48" height="14" rx="7" fill="#2d2d2d"/><circle cx="10" cy="7" r="6" fill="#57b947"/><circle cx="25" cy="7" r="6" fill="#111"/><circle cx="40" cy="7" r="6" fill="#111"/></svg>
<div class="t" style="left:752px;width:40px;text-align:right;top:839.84px;font-size:12px;line-height:16px;color:#3a3a3a;font-weight:normal;">0</div>
<div class="t" style="left:796px;width:60px;text-align:right;top:839.84px;font-size:12px;line-height:16px;color:#3a3a3a;font-weight:normal;">3’000</div>
<div class="t" style="left:873px;width:80px;text-align:right;top:839.84px;font-size:12px;line-height:16px;color:#3a3a3a;font-weight:normal;">3’000</div>
<div class="t" style="left:956px;width:80px;text-align:right;top:839.84px;font-size:12px;line-height:16px;color:#3a3a3a;font-weight:normal;">0</div>
<svg style="position:absolute;left:1081px;top:839px;" width="15" height="13" viewBox="0 0 15 13"><path d="M6.6 1.5H0.75V10.5H10.5V7" fill="none" stroke="#4fa14f" stroke-width="1.5"/><path d="M3.9 8.6L4.6 6L10.9 -0.3L13.3 2.1L7 8.4Z" fill="#4fa14f"/></svg>
<div class="t" style="left:14px;top:866.84px;font-size:12px;line-height:16px;color:#3a3a3a;font-weight:normal;letter-spacing:-0.05px;">Ar24</div>
<div class="t" style="left:64px;top:866.84px;font-size:12px;line-height:16px;color:#3a3a3a;font-weight:normal;letter-spacing:-0.05px;">Archer</div>
<div class="t" style="left:209px;top:866.84px;font-size:12px;line-height:16px;color:#3a3a3a;font-weight:normal;letter-spacing:-0.05px;">Water and Environment</div>
<div class="t" style="left:377px;top:866.84px;font-size:12px;line-height:16px;color:#3a3a3a;font-weight:normal;letter-spacing:-0.05px;">D62</div>
<svg style="position:absolute;left:455px;top:866px;" width="48" height="14" viewBox="0 0 48 14"><rect x="0" y="0" width="48" height="14" rx="7" fill="#2d2d2d"/><circle cx="10" cy="7" r="6" fill="#57b947"/><circle cx="25" cy="7" r="6" fill="#111"/><circle cx="40" cy="7" r="6" fill="#111"/></svg>
<svg style="position:absolute;left:558px;top:866px;" width="48" height="14" viewBox="0 0 48 14"><rect x="0" y="0" width="48" height="14" rx="7" fill="#2d2d2d"/><circle cx="10" cy="7" r="6" fill="#57b947"/><circle cx="25" cy="7" r="6" fill="#111"/><circle cx="40" cy="7" r="6" fill="#111"/></svg>
<svg style="position:absolute;left:676px;top:866px;" width="48" height="14" viewBox="0 0 48 14"><rect x="0" y="0" width="48" height="14" rx="7" fill="#2d2d2d"/><circle cx="10" cy="7" r="6" fill="#57b947"/><circle cx="25" cy="7" r="6" fill="#111"/><circle cx="40" cy="7" r="6" fill="#111"/></svg>
<div class="t" style="left:752px;width:40px;text-align:right;top:866.84px;font-size:12px;line-height:16px;color:#3a3a3a;font-weight:normal;">0</div>
<div class="t" style="left:796px;width:60px;text-align:right;top:866.84px;font-size:12px;line-height:16px;color:#3a3a3a;font-weight:normal;">500</div>
<div class="t" style="left:873px;width:80px;text-align:right;top:866.84px;font-size:12px;line-height:16px;color:#3a3a3a;font-weight:normal;">500</div>
<div class="t" style="left:956px;width:80px;text-align:right;top:866.84px;font-size:12px;line-height:16px;color:#3a3a3a;font-weight:normal;">0</div>
<svg style="position:absolute;left:1081px;top:866px;" width="15" height="13" viewBox="0 0 15 13"><path d="M6.6 1.5H0.75V10.5H10.5V7" fill="none" stroke="#4fa14f" stroke-width="1.5"/><path d="M3.9 8.6L4.6 6L10.9 -0.3L13.3 2.1L7 8.4Z" fill="#4fa14f"/></svg>
<div style="position:absolute;left:1042px;top:239px;width:32px;height:645px;overflow:hidden">
<div class="t" style="left:-12px;width:60px;text-align:right;top:6.84px;font-size:12px;line-height:16px;color:#3a3a3a;font-weight:normal;">44’967</div>
<div class="t" style="left:-12px;width:60px;text-align:right;top:33.84px;font-size:12px;line-height:16px;color:#3a3a3a;font-weight:normal;">13’000</div>
<div class="t" style="left:-12px;width:60px;text-align:right;top:60.84px;font-size:12px;line-height:16px;color:#3a3a3a;font-weight:normal;">6’500</div>
<div class="t" style="left:-12px;width:60px;text-align:right;top:87.84px;font-size:12px;line-height:16px;color:#3a3a3a;font-weight:normal;">40’090</div>
<div class="t" style="left:-12px;width:60px;text-align:right;top:141.84px;font-size:12px;line-height:16px;color:#3a3a3a;font-weight:normal;">6’276</div>
<div class="t" style="left:-12px;width:60px;text-align:right;top:168.84px;font-size:12px;line-height:16px;color:#3a3a3a;font-weight:normal;">8’122</div>
<div class="t" style="left:-12px;width:60px;text-align:right;top:195.84px;font-size:12px;line-height:16px;color:#3a3a3a;font-weight:normal;">4’338</div>
<div class="t" style="left:-12px;width:60px;text-align:right;top:222.84px;font-size:12px;line-height:16px;color:#3a3a3a;font-weight:normal;">9’755</div>
<div class="t" style="left:-12px;width:60px;text-align:right;top:276.84px;font-size:12px;line-height:16px;color:#3a3a3a;font-weight:normal;">2’836</div>
<div class="t" style="left:-12px;width:60px;text-align:right;top:303.84px;font-size:12px;line-height:16px;color:#3a3a3a;font-weight:normal;">1’906</div>
<div class="t" style="left:-12px;width:60px;text-align:right;top:357.84px;font-size:12px;line-height:16px;color:#3a3a3a;font-weight:normal;">839</div>
<div class="t" style="left:-12px;width:60px;text-align:right;top:465.84px;font-size:12px;line-height:16px;color:#3a3a3a;font-weight:normal;">6’532</div>
<div class="t" style="left:-12px;width:60px;text-align:right;top:492.84px;font-size:12px;line-height:16px;color:#3a3a3a;font-weight:normal;">5’323</div>
<div class="t" style="left:-12px;width:60px;text-align:right;top:546.84px;font-size:12px;line-height:16px;color:#3a3a3a;font-weight:normal;">10’235</div>
<div class="t" style="left:-12px;width:60px;text-align:right;top:573.84px;font-size:12px;line-height:16px;color:#3a3a3a;font-weight:normal;">32’214</div>
</div>
<div style="position:absolute;box-sizing:border-box;left:128px;top:886px;width:992px;height:28px;background:#f5f5f5;border-left:1px solid #dcdcdc;border-bottom:1px solid #dcdcdc;box-sizing:border-box"></div>
<div class="t" style="left:29.0px;width:60px;text-align:center;top:891.84px;font-size:12px;line-height:16px;color:#333;font-weight:normal;">WIP</div>
<div class="t" style="left:129.0px;width:140px;text-align:center;top:891.84px;font-size:12px;line-height:16px;color:#333;font-weight:normal;letter-spacing:-0.3px">Revenue vs Costs</div>
<div style="position:absolute;box-sizing:border-box;left:1119px;top:886px;width:1px;height:58px;background:#dcdcdc"></div>
<div style="position:absolute;box-sizing:border-box;left:1055px;top:914px;width:25px;height:26px;border:1px solid #dcdcdc;border-radius:3px;background:#fff"></div>
<svg style="position:absolute;left:1061px;top:920px;" width="13" height="13" viewBox="0 0 13 13"><rect x="3.5" y="1.4" width="6" height="1.8" fill="#222"/><rect x="1.1" y="4.1" width="11.1" height="4.4" rx="1" fill="#222"/><rect x="3.7" y="7.1" width="5.6" height="4.2" fill="#fff" stroke="#222" stroke-width="1.2"/></svg>
<div style="position:absolute;box-sizing:border-box;left:1085px;top:914px;width:25px;height:26px;border:1px solid #dcdcdc;border-radius:3px;background:#fff"></div>
<svg style="position:absolute;left:1091px;top:920px;" width="13" height="13" viewBox="0 0 13 13"><path d="M2.8 4.4V2.5H10.2V11.2H2.8V9.3" fill="none" stroke="#222" stroke-width="1.4"/><path d="M0.3 6.6H5.5" stroke="#222" stroke-width="1.5"/><path d="M4.2 4.4L6.9 6.6L4.2 8.8Z" fill="#222"/></svg>
<svg style="position:absolute;left:1111px;top:483px;" width="8" height="11" viewBox="0 0 8 11"><path d="M6.5 1L1.5 5.5L6.5 10" fill="none" stroke="#1e2430" stroke-width="1.6"/></svg>
<svg style="position:absolute;left:1111px;top:499px;" width="8" height="11" viewBox="0 0 8 11"><path d="M1.5 1L6.5 5.5L1.5 10" fill="none" stroke="#1e2430" stroke-width="1.6"/></svg>
<div style="position:absolute;box-sizing:border-box;left:1133px;top:52px;width:35px;height:18px;border:1px solid #dcdcdc;border-radius:2px;background:#fff;box-sizing:border-box"></div>
<div style="position:absolute;box-sizing:border-box;left:1153px;top:54px;width:14px;height:14px;background:#3a7cc6;border-radius:2px"></div>
<div class="t" style="left:1173px;top:52.84px;font-size:12px;line-height:16px;color:#333;font-weight:normal;letter-spacing:-0.15px;">Alle zeigen</div>
<div style="position:absolute;box-sizing:border-box;left:1246px;top:53px;width:15px;height:15px;border:1px solid #cfcfcf;border-radius:2px;background:#fff;box-sizing:border-box"></div>
<div class="t" style="left:1267px;top:53.84px;font-size:12px;line-height:16px;color:#333;font-weight:normal;letter-spacing:-0.15px">Alle Stati anzeigen</div>
<div style="position:absolute;box-sizing:border-box;left:1125px;top:77px;width:780px;height:839px;border:1px solid #dcdcdc;box-sizing:border-box;background:#fff"></div>
<div style="position:absolute;box-sizing:border-box;left:1264px;top:78px;width:640px;height:23px;background:#f5f5f5;border-left:1px solid #dcdcdc;border-bottom:1px solid #dcdcdc;box-sizing:border-box"></div>
<div class="t" style="left:1145.0px;width:100px;text-align:center;top:81.84px;font-size:12px;line-height:16px;color:#333;font-weight:normal;">Aktionen</div>
<div class="t" style="left:1285.0px;width:100px;text-align:center;top:81.84px;font-size:12px;line-height:16px;color:#333;font-weight:normal;letter-spacing:-0.4px;">Risiko</div>
<div style="position:absolute;box-sizing:border-box;left:1132px;top:106px;width:26px;height:26px;background:#5cb85c;border-radius:3px"></div>
<div style="position:absolute;box-sizing:border-box;left:1139px;top:118px;width:12px;height:2px;background:#fff"></div>
<div style="position:absolute;box-sizing:border-box;left:1144px;top:113px;width:2px;height:12px;background:#fff"></div>
<div style="position:absolute;box-sizing:border-box;left:1165px;top:105px;width:78px;height:28px;border:1px solid #dcdcdc;background:#fff;box-sizing:border-box"></div>
<div class="t" style="left:1172px;top:111.84px;font-size:12px;line-height:16px;color:#8a8a8a;font-weight:normal;letter-spacing:-0.5px;">Referenz</div>
<svg style="position:absolute;left:1226px;top:111px;" width="6" height="15" viewBox="0 0 6 15"><path d="M3 2.5V14.2" stroke="#7a7a7a" stroke-width="1.1"/><path d="M0.4 3.4L3 0.2L5.6 3.4Z" fill="#7a7a7a"/></svg>
<div style="position:absolute;box-sizing:border-box;left:1742px;top:105px;width:160px;height:26px;border:1px solid #dcdcdc;border-radius:3px;background:#fff;box-sizing:border-box"></div>
<svg style="position:absolute;left:1749px;top:111px;" width="12" height="12" viewBox="0 0 12 12"><circle cx="4.8" cy="4.8" r="3.9" fill="none" stroke="#777" stroke-width="1.35"/><path d="M7.6 7.6L11.2 11.2" stroke="#777" stroke-width="1.6" stroke-linecap="round"/></svg>
<div class="t" style="left:1767px;top:110.84px;font-size:12px;line-height:16px;color:#8a8a8a;font-weight:normal;letter-spacing:-0.55px;">Suchen...</div>
<div style="position:absolute;box-sizing:border-box;left:1130px;top:136px;width:772px;height:780px;border:1px solid #dcdcdc;border-bottom:2px solid #d6d6d6;box-sizing:border-box"></div>
<div style="position:absolute;box-sizing:border-box;left:1130px;top:163px;width:772px;height:2px;background:#d6d6d6"></div>
<div style="position:absolute;box-sizing:border-box;left:1131px;top:165px;width:770px;height:26px;background:#f5f5f5"></div>
<div style="position:absolute;box-sizing:border-box;left:1130px;top:191px;width:772px;height:1px;background:#dcdcdc"></div>
<div style="position:absolute;box-sizing:border-box;left:1130px;top:223px;width:772px;height:1px;background:#dcdcdc"></div>
<div style="position:absolute;box-sizing:border-box;left:1130px;top:255px;width:772px;height:1px;background:#dcdcdc"></div>
<div style="position:absolute;box-sizing:border-box;left:1130px;top:287px;width:772px;height:1px;background:#dcdcdc"></div>
<div style="position:absolute;box-sizing:border-box;left:1130px;top:319px;width:772px;height:1px;background:#dcdcdc"></div>
<div style="position:absolute;box-sizing:border-box;left:1130px;top:351px;width:772px;height:1px;background:#dcdcdc"></div>
<div style="position:absolute;box-sizing:border-box;left:1311px;top:136px;width:1px;height:28px;background:#dcdcdc"></div>
<div style="position:absolute;box-sizing:border-box;left:1311px;top:192px;width:1px;height:722px;background:#dcdcdc"></div>
<div style="position:absolute;box-sizing:border-box;left:1511px;top:136px;width:1px;height:28px;background:#dcdcdc"></div>
<div style="position:absolute;box-sizing:border-box;left:1511px;top:192px;width:1px;height:722px;background:#dcdcdc"></div>
<div style="position:absolute;box-sizing:border-box;left:1661px;top:136px;width:1px;height:28px;background:#dcdcdc"></div>
<div style="position:absolute;box-sizing:border-box;left:1661px;top:192px;width:1px;height:722px;background:#dcdcdc"></div>
<div style="position:absolute;box-sizing:border-box;left:1821px;top:136px;width:1px;height:28px;background:#dcdcdc"></div>
<div style="position:absolute;box-sizing:border-box;left:1821px;top:192px;width:1px;height:722px;background:#dcdcdc"></div>
<div style="position:absolute;box-sizing:border-box;left:1670px;top:136px;width:2px;height:28px;background:#d6d6d6"></div>
<div style="position:absolute;box-sizing:border-box;left:1670px;top:192px;width:2px;height:722px;background:#d6d6d6"></div>
<div class="t" style="left:1167px;top:142.84px;font-size:12px;line-height:16px;color:#939393;font-weight:normal;letter-spacing:-0.2px;">Massnahme</div>
<svg style="position:absolute;left:1291px;top:142px;" width="14" height="14" viewBox="0 0 14 14"><path d="M0 0H14V2L9 7V14H5V7L0 2Z" fill="#bdbdbd"/></svg>
<div class="t" style="left:1317px;top:142.84px;font-size:12px;line-height:16px;color:#939393;font-weight:normal;letter-spacing:-0.2px;">Beschreibung der Massnahme</div>
<div class="t" style="left:1517px;top:142.84px;font-size:12px;line-height:16px;color:#939393;font-weight:normal;letter-spacing:-0.2px;">Verantwortliche Person</div>
<svg style="position:absolute;left:1641px;top:142px;" width="14" height="14" viewBox="0 0 14 14"><path d="M0 0H14V2L9 7V14H5V7L0 2Z" fill="#bdbdbd"/></svg>
<div style="position:absolute;left:1662px;top:137px;width:8px;height:26px;overflow:hidden">
<div class="t" style="left:5px;top:5.84px;font-size:12px;line-height:16px;color:#939393;font-weight:normal;">S</div>
</div>
<div class="t" style="left:1677px;top:142.84px;font-size:12px;line-height:16px;color:#939393;font-weight:normal;letter-spacing:-0.2px;">Status</div>
<svg style="position:absolute;left:1800px;top:142px;" width="14" height="14" viewBox="0 0 14 14"><path d="M0 0H14V2L9 7V14H5V7L0 2Z" fill="#bdbdbd"/></svg>
<svg style="position:absolute;left:1143px;top:175px;" width="7" height="4" viewBox="0 0 7 4"><path d="M0 0H7L3.5 4Z" fill="#777"/></svg>
<div class="t" style="left:1167px;top:170.84px;font-size:12px;line-height:16px;color:#8a8a8a;font-weight:bold;letter-spacing:-0.28px;">Referenz: Askern</div>
<div class="t" style="left:1167px;top:197.84px;font-size:12px;line-height:16px;color:#3a3a3a;font-weight:normal;letter-spacing:-0.15px;">Review Budget for emer...</div>
<div class="t" style="left:1317px;top:197.84px;font-size:12px;line-height:16px;color:#3a3a3a;font-weight:normal;letter-spacing:-0.15px;"></div>
<div class="t" style="left:1517px;top:197.84px;font-size:12px;line-height:16px;color:#3a3a3a;font-weight:normal;letter-spacing:-0.15px;">Epple, Walter, EPW</div>
<div class="t" style="left:1677px;top:197.84px;font-size:12px;line-height:16px;color:#3a3a3a;font-weight:normal;letter-spacing:-0.15px;"></div>
<div style="position:absolute;box-sizing:border-box;left:1832px;top:198px;width:17px;height:19px;background:#5cb85c;border-radius:2.5px"></div>
<svg style="position:absolute;left:1835px;top:201px;" width="12" height="13" viewBox="0 0 12 13"><g transform="rotate(45 6 6.5)"><rect x="3.6" y="0.6" width="4.8" height="11.8" rx="2.4" fill="none" stroke="#eaffea" stroke-width="1.4"/><path d="M6 3.2V9" stroke="#3f8f3f" stroke-width="0.9"/></g></svg>
<svg style="position:absolute;left:1855px;top:201px;" width="15" height="13" viewBox="0 0 15 13"><path d="M6.6 1.5H0.75V10.5H10.5V7" fill="none" stroke="#4fa14f" stroke-width="1.5"/><path d="M3.9 8.6L4.6 6L10.9 -0.3L13.3 2.1L7 8.4Z" fill="#4fa14f"/></svg>
<svg style="position:absolute;left:1877px;top:200px;" width="11" height="14" viewBox="0 0 11 14"><rect x="0" y="1.4" width="10.6" height="2.4" rx="0.6" fill="#d9534f"/><rect x="4" y="0.4" width="2.6" height="1.4" fill="#d9534f"/><path d="M1 4.3H9.6V12.5Q9.6 13.7 8.4 13.7H2.2Q1 13.7 1 12.5Z" fill="#d9534f"/></svg>
<div class="t" style="left:1167px;top:229.84px;font-size:12px;line-height:16px;color:#3a3a3a;font-weight:normal;letter-spacing:-0.15px;">Review Budget</div>
<div class="t" style="left:1317px;top:229.84px;font-size:12px;line-height:16px;color:#3a3a3a;font-weight:normal;letter-spacing:-0.15px;"></div>
<div class="t" style="left:1517px;top:229.84px;font-size:12px;line-height:16px;color:#3a3a3a;font-weight:normal;letter-spacing:-0.15px;">AlNa, Par, AlNa</div>
<div class="t" style="left:1677px;top:229.84px;font-size:12px;line-height:16px;color:#3a3a3a;font-weight:normal;letter-spacing:-0.15px;">Genehmigt/In Bearbeitu...</div>
<div style="position:absolute;box-sizing:border-box;left:1832px;top:230px;width:17px;height:19px;background:#5cb85c;border-radius:2.5px"></div>
<svg style="position:absolute;left:1835px;top:233px;" width="12" height="13" viewBox="0 0 12 13"><g transform="rotate(45 6 6.5)"><rect x="3.6" y="0.6" width="4.8" height="11.8" rx="2.4" fill="none" stroke="#eaffea" stroke-width="1.4"/><path d="M6 3.2V9" stroke="#3f8f3f" stroke-width="0.9"/></g></svg>
<svg style="position:absolute;left:1855px;top:233px;" width="15" height="13" viewBox="0 0 15 13"><path d="M6.6 1.5H0.75V10.5H10.5V7" fill="none" stroke="#4fa14f" stroke-width="1.5"/><path d="M3.9 8.6L4.6 6L10.9 -0.3L13.3 2.1L7 8.4Z" fill="#4fa14f"/></svg>
<svg style="position:absolute;left:1877px;top:232px;" width="11" height="14" viewBox="0 0 11 14"><rect x="0" y="1.4" width="10.6" height="2.4" rx="0.6" fill="#d9534f"/><rect x="4" y="0.4" width="2.6" height="1.4" fill="#d9534f"/><path d="M1 4.3H9.6V12.5Q9.6 13.7 8.4 13.7H2.2Q1 13.7 1 12.5Z" fill="#d9534f"/></svg>
<div class="t" style="left:1167px;top:261.84px;font-size:12px;line-height:16px;color:#3a3a3a;font-weight:normal;letter-spacing:-0.15px;">Replan Cost</div>
<div class="t" style="left:1317px;top:261.84px;font-size:12px;line-height:16px;color:#3a3a3a;font-weight:normal;letter-spacing:-0.15px;">Der Kostenplan ist nicht aktuell</div>
<div class="t" style="left:1517px;top:261.84px;font-size:12px;line-height:16px;color:#3a3a3a;font-weight:normal;letter-spacing:-0.15px;">Luchs, Olga, OLLU</div>
<div class="t" style="left:1677px;top:261.84px;font-size:12px;line-height:16px;color:#3a3a3a;font-weight:normal;letter-spacing:-0.15px;">Geplant/To-Do</div>
<div style="position:absolute;box-sizing:border-box;left:1832px;top:262px;width:17px;height:19px;background:#5cb85c;border-radius:2.5px"></div>
<svg style="position:absolute;left:1835px;top:265px;" width="12" height="13" viewBox="0 0 12 13"><g transform="rotate(45 6 6.5)"><rect x="3.6" y="0.6" width="4.8" height="11.8" rx="2.4" fill="none" stroke="#eaffea" stroke-width="1.4"/><path d="M6 3.2V9" stroke="#3f8f3f" stroke-width="0.9"/></g></svg>
<svg style="position:absolute;left:1855px;top:265px;" width="15" height="13" viewBox="0 0 15 13"><path d="M6.6 1.5H0.75V10.5H10.5V7" fill="none" stroke="#4fa14f" stroke-width="1.5"/><path d="M3.9 8.6L4.6 6L10.9 -0.3L13.3 2.1L7 8.4Z" fill="#4fa14f"/></svg>
<svg style="position:absolute;left:1877px;top:264px;" width="11" height="14" viewBox="0 0 11 14"><rect x="0" y="1.4" width="10.6" height="2.4" rx="0.6" fill="#d9534f"/><rect x="4" y="0.4" width="2.6" height="1.4" fill="#d9534f"/><path d="M1 4.3H9.6V12.5Q9.6 13.7 8.4 13.7H2.2Q1 13.7 1 12.5Z" fill="#d9534f"/></svg>
<div class="t" style="left:1167px;top:293.84px;font-size:12px;line-height:16px;color:#3a3a3a;font-weight:normal;letter-spacing:-0.15px;">Nochmals prüfen</div>
<div class="t" style="left:1317px;top:293.84px;font-size:12px;line-height:16px;color:#3a3a3a;font-weight:normal;letter-spacing:-0.15px;">Das interne Projekt &quot;Digitalisierun...</div>
<div class="t" style="left:1517px;top:293.84px;font-size:12px;line-height:16px;color:#3a3a3a;font-weight:normal;letter-spacing:-0.15px;">Sommer, Martin, MS</div>
<div class="t" style="left:1677px;top:293.84px;font-size:12px;line-height:16px;color:#3a3a3a;font-weight:normal;letter-spacing:-0.15px;">Genehmigt/In Bearbeitu...</div>
<div style="position:absolute;box-sizing:border-box;left:1832px;top:294px;width:17px;height:19px;background:#5cb85c;border-radius:2.5px"></div>
<svg style="position:absolute;left:1835px;top:297px;" width="12" height="13" viewBox="0 0 12 13"><g transform="rotate(45 6 6.5)"><rect x="3.6" y="0.6" width="4.8" height="11.8" rx="2.4" fill="none" stroke="#eaffea" stroke-width="1.4"/><path d="M6 3.2V9" stroke="#3f8f3f" stroke-width="0.9"/></g></svg>
<svg style="position:absolute;left:1855px;top:297px;" width="15" height="13" viewBox="0 0 15 13"><path d="M6.6 1.5H0.75V10.5H10.5V7" fill="none" stroke="#4fa14f" stroke-width="1.5"/><path d="M3.9 8.6L4.6 6L10.9 -0.3L13.3 2.1L7 8.4Z" fill="#4fa14f"/></svg>
<svg style="position:absolute;left:1877px;top:296px;" width="11" height="14" viewBox="0 0 11 14"><rect x="0" y="1.4" width="10.6" height="2.4" rx="0.6" fill="#d9534f"/><rect x="4" y="0.4" width="2.6" height="1.4" fill="#d9534f"/><path d="M1 4.3H9.6V12.5Q9.6 13.7 8.4 13.7H2.2Q1 13.7 1 12.5Z" fill="#d9534f"/></svg>
<div class="t" style="left:1167px;top:325.84px;font-size:12px;line-height:16px;color:#3a3a3a;font-weight:normal;letter-spacing:-0.15px;">CF Planung anpassen für...</div>
<div class="t" style="left:1317px;top:325.84px;font-size:12px;line-height:16px;color:#3a3a3a;font-weight:normal;letter-spacing:-0.15px;">Cash Flow Planung für 2022 und k...</div>
<div class="t" style="left:1517px;top:325.84px;font-size:12px;line-height:16px;color:#3a3a3a;font-weight:normal;letter-spacing:-0.15px;">Sommer, Martin, MS</div>
<div class="t" style="left:1677px;top:325.84px;font-size:12px;line-height:16px;color:#3a3a3a;font-weight:normal;letter-spacing:-0.15px;">Genehmigt/In Bearbeitu...</div>
<div style="position:absolute;box-sizing:border-box;left:1832px;top:326px;width:17px;height:19px;background:#5cb85c;border-radius:2.5px"></div>
<svg style="position:absolute;left:1835px;top:329px;" width="12" height="13" viewBox="0 0 12 13"><g transform="rotate(45 6 6.5)"><rect x="3.6" y="0.6" width="4.8" height="11.8" rx="2.4" fill="none" stroke="#eaffea" stroke-width="1.4"/><path d="M6 3.2V9" stroke="#3f8f3f" stroke-width="0.9"/></g></svg>
<svg style="position:absolute;left:1855px;top:329px;" width="15" height="13" viewBox="0 0 15 13"><path d="M6.6 1.5H0.75V10.5H10.5V7" fill="none" stroke="#4fa14f" stroke-width="1.5"/><path d="M3.9 8.6L4.6 6L10.9 -0.3L13.3 2.1L7 8.4Z" fill="#4fa14f"/></svg>
<svg style="position:absolute;left:1877px;top:328px;" width="11" height="14" viewBox="0 0 11 14"><rect x="0" y="1.4" width="10.6" height="2.4" rx="0.6" fill="#d9534f"/><rect x="4" y="0.4" width="2.6" height="1.4" fill="#d9534f"/><path d="M1 4.3H9.6V12.5Q9.6 13.7 8.4 13.7H2.2Q1 13.7 1 12.5Z" fill="#d9534f"/></svg>
<div style="position:absolute;box-sizing:border-box;left:0px;top:944px;width:1920px;height:21px;background:#343a40"></div>
<div class="t" style="left:5px;top:950.04px;font-size:13.75px;line-height:16px;color:#767b80;font-weight:normal;">ms, database/901_DEMO_myPARM_Management_Preview - ver. 2021.36.2.0</div>
</body></html>
